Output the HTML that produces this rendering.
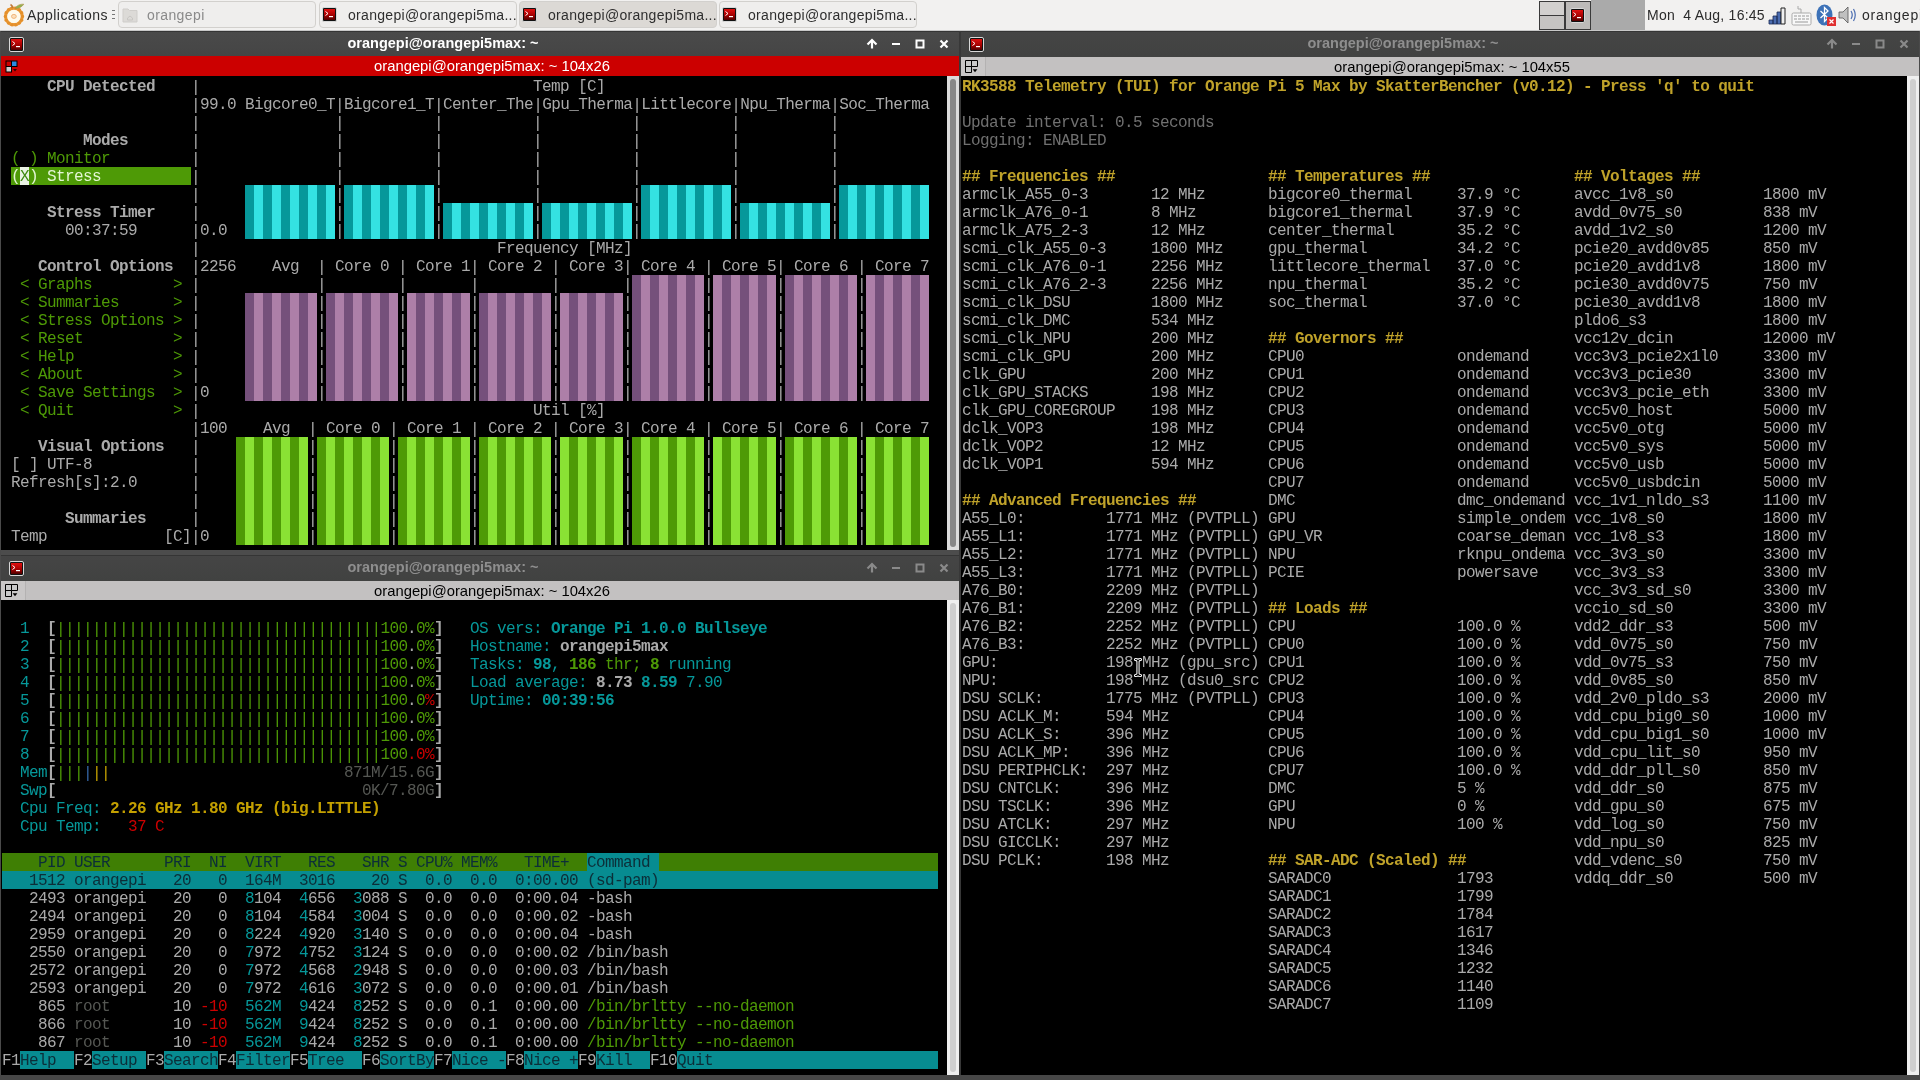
<!DOCTYPE html>
<html><head><meta charset="utf-8"><style>
html,body{margin:0;padding:0}
body{width:1920px;height:1080px;position:relative;overflow:hidden;background:#3e3e3e;font-family:"Liberation Sans",sans-serif}
.r{position:absolute}
.t{position:absolute;font-family:"Liberation Mono",monospace;font-size:16px;letter-spacing:-0.6px;line-height:18px;white-space:pre;margin-top:1px}
.t i{font-style:normal;position:relative;top:1px}
.tt{position:absolute;font-family:"Liberation Sans",sans-serif;font-weight:bold;font-size:14.5px;line-height:17px;text-align:center;white-space:pre}
.ht{position:absolute;font-family:"Liberation Sans",sans-serif;font-size:14.8px;line-height:17px;text-align:center;white-space:pre}
.tb{position:absolute;font-family:"Liberation Sans",sans-serif;font-size:13px;line-height:16px;white-space:pre;color:#2e2e2e}
</style></head><body>
<div style="position:absolute;left:0;top:0;width:1920px;height:1080px;will-change:transform">
<div style="position:absolute;left:0;top:0;width:1920px;height:31px;background:#f2f1f0"></div>
<div style="position:absolute;left:0;top:30px;width:1920px;height:1px;background:#c8c8c8"></div>
<div style="position:absolute;left:0;top:31px;width:1920px;height:1px;background:#353535"></div>
<svg style="position:absolute;left:0px;top:0px" width="30" height="30" viewBox="0 0 30 30">
<circle cx="13.9" cy="16.4" r="8.3" fill="none" stroke="#eb9a35" stroke-width="3.2"/><circle cx="22.50" cy="16.40" r="1.6" fill="#e48f2a"/><circle cx="21.65" cy="20.13" r="1.6" fill="#e48f2a"/><circle cx="19.26" cy="23.12" r="1.6" fill="#e48f2a"/><circle cx="15.81" cy="24.78" r="1.6" fill="#e48f2a"/><circle cx="11.99" cy="24.78" r="1.6" fill="#e48f2a"/><circle cx="8.54" cy="23.12" r="1.6" fill="#e48f2a"/><circle cx="6.15" cy="20.13" r="1.6" fill="#e48f2a"/><circle cx="5.30" cy="16.40" r="1.6" fill="#e48f2a"/><circle cx="6.15" cy="12.67" r="1.6" fill="#e48f2a"/><circle cx="8.54" cy="9.68" r="1.6" fill="#e48f2a"/><circle cx="11.99" cy="8.02" r="1.6" fill="#e48f2a"/><circle cx="15.81" cy="8.02" r="1.6" fill="#e48f2a"/><circle cx="19.26" cy="9.68" r="1.6" fill="#e48f2a"/><circle cx="21.65" cy="12.67" r="1.6" fill="#e48f2a"/>
<circle cx="13.9" cy="16.4" r="6.5" fill="#fffbec"/>
<ellipse cx="13.9" cy="16.4" rx="2.4" ry="2" fill="#fbe0bc" stroke="#f2b578" stroke-width="1"/>
<path d="M15 8.5 C17 5 20.5 4 23.8 4.2 C22 7 18.5 8.6 15 8.5 Z" fill="#8fb650" stroke="#b08a40" stroke-width="0.6"/>
<path d="M10.5 4.5 C11.5 5 12.5 6.5 12.5 8" stroke="#c07a3a" stroke-width="1.8" fill="none"/>
</svg>
<div class="tb" style="left:27px;top:7px;font-size:14px;letter-spacing:0.45px;color:#2b2b2b">Applications</div>
<div style="position:absolute;left:112px;top:10px;width:3px;height:10px;background:repeating-linear-gradient(#777 0 1px,transparent 1px 4px)"></div>
<div style="position:absolute;left:118px;top:1px;width:198px;height:27px;border:1px solid #d2d0cd;border-radius:4px;background:#efeeed;box-sizing:border-box"></div>
<svg style="position:absolute;left:122px;top:7px" width="16" height="16" viewBox="0 0 16 16"><path d="M1 2 H6 L7.5 3.5 H15 V15 H1 Z" fill="#dcdad7" stroke="#cfcdca"/><path d="M5.5 11 L8 9 L10.5 11 V13 H5.5 Z" fill="none" stroke="#c8c6c3"/></svg>
<div class="tb" style="left:147px;top:7px;font-size:14px;letter-spacing:0.4px;color:#8a8a8a">orangepi</div>
<div style="position:absolute;left:319px;top:1px;width:198px;height:27px;border:1px solid #d2d0cd;border-radius:4px;background:#efeeed;box-sizing:border-box"></div>
<div style="position:absolute;left:322px;top:7px;width:13px;height:13px;border:1px solid #d8d8d8;border-radius:2px;background:#000;box-shadow:inset 0 0 0 1px #111"></div>
<div style="position:absolute;left:324px;top:9px;width:11px;height:11px;background:linear-gradient(#e01010,#a00000 60%,#500000)"></div>
<svg style="position:absolute;left:322px;top:7px" width="15" height="15" viewBox="0 0 15 15"><path d="M3.5 4.5 L6 6.5 L3.5 8.5" stroke="#fff" stroke-width="1" fill="none"/><rect x="7" y="9" width="4" height="1.2" fill="#fff"/></svg>
<div class="tb" style="left:348px;top:7px;font-size:14px;letter-spacing:0.3px;color:#2e2e2e">orangepi@orangepi5ma...</div>
<div style="position:absolute;left:519px;top:1px;width:198px;height:27px;border:1px solid #d2d0cd;border-radius:4px;background:#dcd9d5;box-sizing:border-box"></div>
<div style="position:absolute;left:522px;top:7px;width:13px;height:13px;border:1px solid #d8d8d8;border-radius:2px;background:#000;box-shadow:inset 0 0 0 1px #111"></div>
<div style="position:absolute;left:524px;top:9px;width:11px;height:11px;background:linear-gradient(#e01010,#a00000 60%,#500000)"></div>
<svg style="position:absolute;left:522px;top:7px" width="15" height="15" viewBox="0 0 15 15"><path d="M3.5 4.5 L6 6.5 L3.5 8.5" stroke="#fff" stroke-width="1" fill="none"/><rect x="7" y="9" width="4" height="1.2" fill="#fff"/></svg>
<div class="tb" style="left:548px;top:7px;font-size:14px;letter-spacing:0.3px;color:#2e2e2e">orangepi@orangepi5ma...</div>
<div style="position:absolute;left:719px;top:1px;width:198px;height:27px;border:1px solid #d2d0cd;border-radius:4px;background:#efeeed;box-sizing:border-box"></div>
<div style="position:absolute;left:722px;top:7px;width:13px;height:13px;border:1px solid #d8d8d8;border-radius:2px;background:#000;box-shadow:inset 0 0 0 1px #111"></div>
<div style="position:absolute;left:724px;top:9px;width:11px;height:11px;background:linear-gradient(#e01010,#a00000 60%,#500000)"></div>
<svg style="position:absolute;left:722px;top:7px" width="15" height="15" viewBox="0 0 15 15"><path d="M3.5 4.5 L6 6.5 L3.5 8.5" stroke="#fff" stroke-width="1" fill="none"/><rect x="7" y="9" width="4" height="1.2" fill="#fff"/></svg>
<div class="tb" style="left:748px;top:7px;font-size:14px;letter-spacing:0.3px;color:#2e2e2e">orangepi@orangepi5ma...</div>
<div style="position:absolute;left:1539px;top:1px;width:52px;height:29px;background:#3a3a3a"></div>
<div style="position:absolute;left:1540px;top:2px;width:24px;height:13px;background:#d2d0ce"></div>
<div style="position:absolute;left:1540px;top:16px;width:24px;height:13px;background:#c6c4c2"></div>
<div style="position:absolute;left:1566px;top:2px;width:24px;height:27px;background:#bdbbb9"></div>
<div style="position:absolute;left:1570px;top:8px;width:13px;height:13px;border:1px solid #d8d8d8;border-radius:2px;background:#000;box-shadow:inset 0 0 0 1px #111"></div>
<div style="position:absolute;left:1572px;top:10px;width:11px;height:11px;background:linear-gradient(#e01010,#a00000 60%,#500000)"></div>
<svg style="position:absolute;left:1570px;top:8px" width="15" height="15" viewBox="0 0 15 15"><path d="M3.5 4.5 L6 6.5 L3.5 8.5" stroke="#fff" stroke-width="1" fill="none"/><rect x="7" y="9" width="4" height="1.2" fill="#fff"/></svg>
<div style="position:absolute;left:1591px;top:0px;width:54px;height:30px;background:#aaaaaa"></div>
<div class="tb" style="left:1647px;top:7px;font-size:14px;letter-spacing:0.25px;color:#2b2b2b">Mon  4 Aug, 16:45</div>
<svg style="position:absolute;left:1768px;top:7px" width="20" height="18" viewBox="0 0 20 18">
<path d="M1 17 V13 H5 V17 Z M5 17 V9 H9 V17 Z M9 17 V5 H13 V17 Z" fill="#4a6cb0" stroke="#1a2a50" stroke-width="0.8"/>
<path d="M13 17 V1 H17 V17 Z" fill="#f0f0f0" stroke="#222" stroke-width="1"/></svg>
<svg style="position:absolute;left:1791px;top:5px" width="22" height="22" viewBox="0 0 22 22">
<rect x="1" y="8" width="19" height="12" rx="1.5" fill="#f8f8f8" stroke="#aaa"/><path d="M10 8 V4 H7 V1" stroke="#aaa" fill="none"/>
<g fill="#c8c8c8"><rect x="3" y="10" width="3" height="2"/><rect x="7" y="10" width="3" height="2"/><rect x="11" y="10" width="3" height="2"/><rect x="15" y="10" width="3" height="2"/>
<rect x="3" y="13" width="3" height="2"/><rect x="7" y="13" width="3" height="2"/><rect x="11" y="13" width="3" height="2"/><rect x="15" y="13" width="3" height="2"/><rect x="4" y="16" width="13" height="2"/></g></svg>
<svg style="position:absolute;left:1816px;top:4px" width="22" height="23" viewBox="0 0 22 23">
<ellipse cx="8.5" cy="11" rx="8" ry="10.5" fill="#3d72b8"/><path d="M4.5 7 L12 14 L8.5 17.5 V3.5 L12 7 L4.5 14" stroke="#fff" stroke-width="1.3" fill="none"/>
<rect x="11" y="13" width="9" height="9" fill="#e03030"/><path d="M13.5 15.5 L17.5 19.5 M17.5 15.5 L13.5 19.5" stroke="#fff" stroke-width="1.2"/></svg>
<svg style="position:absolute;left:1838px;top:5px" width="20" height="20" viewBox="0 0 20 20">
<path d="M1 7 H5 L10 2 V18 L5 13 H1 Z" fill="#c0c0c0" stroke="#555" stroke-width="0.8"/><path d="M13 6 Q15.5 10 13 14 M15.5 4 Q19 10 15.5 16" stroke="#4a6cb0" stroke-width="1.2" fill="none"/></svg>
<div class="tb" style="left:1862px;top:7px;font-size:14px;letter-spacing:0.8px;color:#2b2b2b">orangepi</div>
<div style="position:absolute;left:0px;top:31px;width:960px;height:26px;background:linear-gradient(#4a4a4a,#454545)"></div>
<div style="position:absolute;left:0px;top:31px;width:960px;height:1px;background:#353535"></div>
<div style="position:absolute;left:9px;top:37px;width:13px;height:13px;border:1px solid #d8d8d8;border-radius:2px;background:#000;box-shadow:inset 0 0 0 1px #111"></div>
<div style="position:absolute;left:11px;top:39px;width:11px;height:11px;background:linear-gradient(#e01010,#a00000 60%,#500000)"></div>
<svg style="position:absolute;left:9px;top:37px" width="15" height="15" viewBox="0 0 15 15"><path d="M3.5 4.5 L6 6.5 L3.5 8.5" stroke="#fff" stroke-width="1" fill="none"/><rect x="7" y="9" width="4" height="1.2" fill="#fff"/></svg>
<div class="tt" style="left:293px;top:35px;width:300px;color:#ffffff">orangepi@orangepi5max: ~</div>
<svg style="position:absolute;left:865px;top:31px" width="95" height="25" viewBox="0 0 95 25">
<path d="M7 17.5 V10 M2.5 13.5 L7 9 L11.5 13.5" stroke="#ffffff" stroke-width="2.2" fill="none"/>
<rect x="27" y="12" width="8" height="2" fill="#ffffff"/>
<rect x="51.5" y="9.5" width="7" height="7" stroke="#ffffff" stroke-width="2" fill="none"/>
<path d="M75.5 9.5 L82.5 16.5 M82.5 9.5 L75.5 16.5" stroke="#ffffff" stroke-width="2.2"/>
</svg>
<div style="position:absolute;left:1px;top:56px;width:958px;height:20px;background:#cc0000"></div>
<div class="ht" style="left:12px;top:58px;width:960px;color:#fff">orangepi@orangepi5max: ~ 104x26</div>
<svg style="position:absolute;left:5px;top:60px" width="14" height="14" viewBox="0 0 14 14">
<rect x="0.5" y="0.5" width="12" height="12" fill="#000"/>
<rect x="1.5" y="1.5" width="4.5" height="4.5" fill="#cc0000"/><rect x="7" y="1.5" width="4.5" height="4.5" fill="#2a8ae0"/>
<rect x="1.5" y="7" width="4.5" height="4.5" fill="#cfcfcf"/><rect x="7" y="7" width="6" height="6" fill="#cc0000"/>
<path d="M8 9 L12 9 L10 11.5 Z" fill="#300"/></svg>
<div style="position:absolute;left:1px;top:76px;width:958px;height:474px;background:#000"></div>
<div style="position:absolute;left:947px;top:76px;width:12px;height:474px;background:#dcdcdc"></div>
<div style="position:absolute;left:950px;top:79px;width:6px;height:468px;background:#878787;border-radius:3px"></div>
<div style="position:absolute;left:0px;top:550px;width:960px;height:5px;background:#4c4c4c"></div>
<div style="position:absolute;left:0px;top:555px;width:960px;height:26px;background:linear-gradient(#454545,#414241)"></div>
<div style="position:absolute;left:0px;top:555px;width:960px;height:1px;background:#353535"></div>
<div style="position:absolute;left:9px;top:561px;width:13px;height:13px;border:1px solid #d8d8d8;border-radius:2px;background:#000;box-shadow:inset 0 0 0 1px #111"></div>
<div style="position:absolute;left:11px;top:563px;width:11px;height:11px;background:linear-gradient(#e01010,#a00000 60%,#500000)"></div>
<svg style="position:absolute;left:9px;top:561px" width="15" height="15" viewBox="0 0 15 15"><path d="M3.5 4.5 L6 6.5 L3.5 8.5" stroke="#fff" stroke-width="1" fill="none"/><rect x="7" y="9" width="4" height="1.2" fill="#fff"/></svg>
<div class="tt" style="left:293px;top:559px;width:300px;color:#8e8e8e">orangepi@orangepi5max: ~</div>
<svg style="position:absolute;left:865px;top:555px" width="95" height="25" viewBox="0 0 95 25">
<path d="M7 17.5 V10 M2.5 13.5 L7 9 L11.5 13.5" stroke="#8a8a8a" stroke-width="2.2" fill="none"/>
<rect x="27" y="12" width="8" height="2" fill="#8a8a8a"/>
<rect x="51.5" y="9.5" width="7" height="7" stroke="#8a8a8a" stroke-width="2" fill="none"/>
<path d="M75.5 9.5 L82.5 16.5 M82.5 9.5 L75.5 16.5" stroke="#8a8a8a" stroke-width="2.2"/>
</svg>
<div style="position:absolute;left:1px;top:581px;width:958px;height:19px;background:#c3c1c1"></div>
<div style="position:absolute;left:1px;top:581px;width:24px;height:19px;background:#c9c7c7;border-right:1px solid #b4b2b2"></div>
<div class="ht" style="left:12px;top:583px;width:960px;color:#000;margin-top:0px">orangepi@orangepi5max: ~ 104x26</div>
<svg style="position:absolute;left:5px;top:584px" width="14" height="14" viewBox="0 0 14 14">
<path d="M0.5 0.5 H12.5 V6.5 H6.5 V12.5 H0.5 Z M6.5 0.5 V6.5 M0.5 6.5 H6.5" stroke="#000" stroke-width="1" fill="#c8c8c8"/>
<path d="M7.6 9.2 L12.4 9.2 L10 12.2 Z" fill="#000"/></svg>
<div style="position:absolute;left:1px;top:600px;width:958px;height:475px;background:#000"></div>
<div style="position:absolute;left:947px;top:600px;width:12px;height:475px;background:#efefef"></div>
<div style="position:absolute;left:950px;top:603px;width:6px;height:469px;background:#cfcfcf;border-radius:3px"></div>
<div style="position:absolute;left:960px;top:31px;width:960px;height:26px;background:linear-gradient(#454545,#414241)"></div>
<div style="position:absolute;left:960px;top:31px;width:960px;height:1px;background:#353535"></div>
<div style="position:absolute;left:969px;top:37px;width:13px;height:13px;border:1px solid #d8d8d8;border-radius:2px;background:#000;box-shadow:inset 0 0 0 1px #111"></div>
<div style="position:absolute;left:971px;top:39px;width:11px;height:11px;background:linear-gradient(#e01010,#a00000 60%,#500000)"></div>
<svg style="position:absolute;left:969px;top:37px" width="15" height="15" viewBox="0 0 15 15"><path d="M3.5 4.5 L6 6.5 L3.5 8.5" stroke="#fff" stroke-width="1" fill="none"/><rect x="7" y="9" width="4" height="1.2" fill="#fff"/></svg>
<div class="tt" style="left:1253px;top:35px;width:300px;color:#8e8e8e">orangepi@orangepi5max: ~</div>
<svg style="position:absolute;left:1825px;top:31px" width="95" height="25" viewBox="0 0 95 25">
<path d="M7 17.5 V10 M2.5 13.5 L7 9 L11.5 13.5" stroke="#8a8a8a" stroke-width="2.2" fill="none"/>
<rect x="27" y="12" width="8" height="2" fill="#8a8a8a"/>
<rect x="51.5" y="9.5" width="7" height="7" stroke="#8a8a8a" stroke-width="2" fill="none"/>
<path d="M75.5 9.5 L82.5 16.5 M82.5 9.5 L75.5 16.5" stroke="#8a8a8a" stroke-width="2.2"/>
</svg>
<div style="position:absolute;left:961px;top:57px;width:958px;height:19px;background:#c3c1c1"></div>
<div style="position:absolute;left:961px;top:57px;width:24px;height:19px;background:#c9c7c7;border-right:1px solid #b4b2b2"></div>
<div class="ht" style="left:972px;top:59px;width:960px;color:#000;margin-top:0px">orangepi@orangepi5max: ~ 104x55</div>
<svg style="position:absolute;left:965px;top:60px" width="14" height="14" viewBox="0 0 14 14">
<path d="M0.5 0.5 H12.5 V6.5 H6.5 V12.5 H0.5 Z M6.5 0.5 V6.5 M0.5 6.5 H6.5" stroke="#000" stroke-width="1" fill="#c8c8c8"/>
<path d="M7.6 9.2 L12.4 9.2 L10 12.2 Z" fill="#000"/></svg>
<div style="position:absolute;left:961px;top:76px;width:958px;height:999px;background:#000"></div>
<div style="position:absolute;left:1907px;top:76px;width:12px;height:999px;background:#efefef"></div>
<div style="position:absolute;left:1910px;top:79px;width:6px;height:993px;background:#cfcfcf;border-radius:3px"></div>
<div style="position:absolute;left:0;top:31px;width:1px;height:1049px;background:#4a4a4a"></div>
<div style="position:absolute;left:959px;top:31px;width:2px;height:1049px;background:#383838"></div>
<div style="position:absolute;left:1919px;top:31px;width:1px;height:1049px;background:#4a4a4a"></div>
<div style="position:absolute;left:0;top:1075px;width:1920px;height:5px;background:#474747"></div>
<div style="position:absolute;left:0;top:0;width:1920px;height:1080px;will-change:transform"><div class="r" style="left:11px;top:167px;width:180px;height:18px;background:#4e9a06"></div>
<div class="r" style="left:20px;top:167px;width:9px;height:18px;background:#eaf2e4"></div>
<div class="r" style="left:245px;top:185px;width:9px;height:54px;background:#06989a"></div>
<div class="r" style="left:254px;top:185px;width:9px;height:54px;background:#34e2e2"></div>
<div class="r" style="left:263px;top:185px;width:9px;height:54px;background:#06989a"></div>
<div class="r" style="left:272px;top:185px;width:9px;height:54px;background:#34e2e2"></div>
<div class="r" style="left:281px;top:185px;width:9px;height:54px;background:#06989a"></div>
<div class="r" style="left:290px;top:185px;width:9px;height:54px;background:#34e2e2"></div>
<div class="r" style="left:299px;top:185px;width:9px;height:54px;background:#06989a"></div>
<div class="r" style="left:308px;top:185px;width:9px;height:54px;background:#34e2e2"></div>
<div class="r" style="left:317px;top:185px;width:9px;height:54px;background:#06989a"></div>
<div class="r" style="left:326px;top:185px;width:9px;height:54px;background:#34e2e2"></div>
<div class="r" style="left:344px;top:185px;width:9px;height:54px;background:#06989a"></div>
<div class="r" style="left:353px;top:185px;width:9px;height:54px;background:#34e2e2"></div>
<div class="r" style="left:362px;top:185px;width:9px;height:54px;background:#06989a"></div>
<div class="r" style="left:371px;top:185px;width:9px;height:54px;background:#34e2e2"></div>
<div class="r" style="left:380px;top:185px;width:9px;height:54px;background:#06989a"></div>
<div class="r" style="left:389px;top:185px;width:9px;height:54px;background:#34e2e2"></div>
<div class="r" style="left:398px;top:185px;width:9px;height:54px;background:#06989a"></div>
<div class="r" style="left:407px;top:185px;width:9px;height:54px;background:#34e2e2"></div>
<div class="r" style="left:416px;top:185px;width:9px;height:54px;background:#06989a"></div>
<div class="r" style="left:425px;top:185px;width:9px;height:54px;background:#34e2e2"></div>
<div class="r" style="left:443px;top:203px;width:9px;height:36px;background:#06989a"></div>
<div class="r" style="left:452px;top:203px;width:9px;height:36px;background:#34e2e2"></div>
<div class="r" style="left:461px;top:203px;width:9px;height:36px;background:#06989a"></div>
<div class="r" style="left:470px;top:203px;width:9px;height:36px;background:#34e2e2"></div>
<div class="r" style="left:479px;top:203px;width:9px;height:36px;background:#06989a"></div>
<div class="r" style="left:488px;top:203px;width:9px;height:36px;background:#34e2e2"></div>
<div class="r" style="left:497px;top:203px;width:9px;height:36px;background:#06989a"></div>
<div class="r" style="left:506px;top:203px;width:9px;height:36px;background:#34e2e2"></div>
<div class="r" style="left:515px;top:203px;width:9px;height:36px;background:#06989a"></div>
<div class="r" style="left:524px;top:203px;width:9px;height:36px;background:#34e2e2"></div>
<div class="r" style="left:542px;top:203px;width:9px;height:36px;background:#06989a"></div>
<div class="r" style="left:551px;top:203px;width:9px;height:36px;background:#34e2e2"></div>
<div class="r" style="left:560px;top:203px;width:9px;height:36px;background:#06989a"></div>
<div class="r" style="left:569px;top:203px;width:9px;height:36px;background:#34e2e2"></div>
<div class="r" style="left:578px;top:203px;width:9px;height:36px;background:#06989a"></div>
<div class="r" style="left:587px;top:203px;width:9px;height:36px;background:#34e2e2"></div>
<div class="r" style="left:596px;top:203px;width:9px;height:36px;background:#06989a"></div>
<div class="r" style="left:605px;top:203px;width:9px;height:36px;background:#34e2e2"></div>
<div class="r" style="left:614px;top:203px;width:9px;height:36px;background:#06989a"></div>
<div class="r" style="left:623px;top:203px;width:9px;height:36px;background:#34e2e2"></div>
<div class="r" style="left:641px;top:185px;width:9px;height:54px;background:#06989a"></div>
<div class="r" style="left:650px;top:185px;width:9px;height:54px;background:#34e2e2"></div>
<div class="r" style="left:659px;top:185px;width:9px;height:54px;background:#06989a"></div>
<div class="r" style="left:668px;top:185px;width:9px;height:54px;background:#34e2e2"></div>
<div class="r" style="left:677px;top:185px;width:9px;height:54px;background:#06989a"></div>
<div class="r" style="left:686px;top:185px;width:9px;height:54px;background:#34e2e2"></div>
<div class="r" style="left:695px;top:185px;width:9px;height:54px;background:#06989a"></div>
<div class="r" style="left:704px;top:185px;width:9px;height:54px;background:#34e2e2"></div>
<div class="r" style="left:713px;top:185px;width:9px;height:54px;background:#06989a"></div>
<div class="r" style="left:722px;top:185px;width:9px;height:54px;background:#34e2e2"></div>
<div class="r" style="left:740px;top:203px;width:9px;height:36px;background:#06989a"></div>
<div class="r" style="left:749px;top:203px;width:9px;height:36px;background:#34e2e2"></div>
<div class="r" style="left:758px;top:203px;width:9px;height:36px;background:#06989a"></div>
<div class="r" style="left:767px;top:203px;width:9px;height:36px;background:#34e2e2"></div>
<div class="r" style="left:776px;top:203px;width:9px;height:36px;background:#06989a"></div>
<div class="r" style="left:785px;top:203px;width:9px;height:36px;background:#34e2e2"></div>
<div class="r" style="left:794px;top:203px;width:9px;height:36px;background:#06989a"></div>
<div class="r" style="left:803px;top:203px;width:9px;height:36px;background:#34e2e2"></div>
<div class="r" style="left:812px;top:203px;width:9px;height:36px;background:#06989a"></div>
<div class="r" style="left:821px;top:203px;width:9px;height:36px;background:#34e2e2"></div>
<div class="r" style="left:839px;top:185px;width:9px;height:54px;background:#06989a"></div>
<div class="r" style="left:848px;top:185px;width:9px;height:54px;background:#34e2e2"></div>
<div class="r" style="left:857px;top:185px;width:9px;height:54px;background:#06989a"></div>
<div class="r" style="left:866px;top:185px;width:9px;height:54px;background:#34e2e2"></div>
<div class="r" style="left:875px;top:185px;width:9px;height:54px;background:#06989a"></div>
<div class="r" style="left:884px;top:185px;width:9px;height:54px;background:#34e2e2"></div>
<div class="r" style="left:893px;top:185px;width:9px;height:54px;background:#06989a"></div>
<div class="r" style="left:902px;top:185px;width:9px;height:54px;background:#34e2e2"></div>
<div class="r" style="left:911px;top:185px;width:9px;height:54px;background:#06989a"></div>
<div class="r" style="left:920px;top:185px;width:9px;height:54px;background:#34e2e2"></div>
<div class="r" style="left:245px;top:293px;width:9px;height:108px;background:#75507b"></div>
<div class="r" style="left:254px;top:293px;width:9px;height:108px;background:#ad7fa8"></div>
<div class="r" style="left:263px;top:293px;width:9px;height:108px;background:#75507b"></div>
<div class="r" style="left:272px;top:293px;width:9px;height:108px;background:#ad7fa8"></div>
<div class="r" style="left:281px;top:293px;width:9px;height:108px;background:#75507b"></div>
<div class="r" style="left:290px;top:293px;width:9px;height:108px;background:#ad7fa8"></div>
<div class="r" style="left:299px;top:293px;width:9px;height:108px;background:#75507b"></div>
<div class="r" style="left:308px;top:293px;width:9px;height:108px;background:#ad7fa8"></div>
<div class="r" style="left:326px;top:293px;width:9px;height:108px;background:#75507b"></div>
<div class="r" style="left:335px;top:293px;width:9px;height:108px;background:#ad7fa8"></div>
<div class="r" style="left:344px;top:293px;width:9px;height:108px;background:#75507b"></div>
<div class="r" style="left:353px;top:293px;width:9px;height:108px;background:#ad7fa8"></div>
<div class="r" style="left:362px;top:293px;width:9px;height:108px;background:#75507b"></div>
<div class="r" style="left:371px;top:293px;width:9px;height:108px;background:#ad7fa8"></div>
<div class="r" style="left:380px;top:293px;width:9px;height:108px;background:#75507b"></div>
<div class="r" style="left:389px;top:293px;width:9px;height:108px;background:#ad7fa8"></div>
<div class="r" style="left:407px;top:293px;width:9px;height:108px;background:#ad7fa8"></div>
<div class="r" style="left:416px;top:293px;width:9px;height:108px;background:#75507b"></div>
<div class="r" style="left:425px;top:293px;width:9px;height:108px;background:#ad7fa8"></div>
<div class="r" style="left:434px;top:293px;width:9px;height:108px;background:#75507b"></div>
<div class="r" style="left:443px;top:293px;width:9px;height:108px;background:#ad7fa8"></div>
<div class="r" style="left:452px;top:293px;width:9px;height:108px;background:#75507b"></div>
<div class="r" style="left:461px;top:293px;width:9px;height:108px;background:#ad7fa8"></div>
<div class="r" style="left:479px;top:293px;width:9px;height:108px;background:#75507b"></div>
<div class="r" style="left:488px;top:293px;width:9px;height:108px;background:#ad7fa8"></div>
<div class="r" style="left:497px;top:293px;width:9px;height:108px;background:#75507b"></div>
<div class="r" style="left:506px;top:293px;width:9px;height:108px;background:#ad7fa8"></div>
<div class="r" style="left:515px;top:293px;width:9px;height:108px;background:#75507b"></div>
<div class="r" style="left:524px;top:293px;width:9px;height:108px;background:#ad7fa8"></div>
<div class="r" style="left:533px;top:293px;width:9px;height:108px;background:#75507b"></div>
<div class="r" style="left:542px;top:293px;width:9px;height:108px;background:#ad7fa8"></div>
<div class="r" style="left:560px;top:293px;width:9px;height:108px;background:#ad7fa8"></div>
<div class="r" style="left:569px;top:293px;width:9px;height:108px;background:#75507b"></div>
<div class="r" style="left:578px;top:293px;width:9px;height:108px;background:#ad7fa8"></div>
<div class="r" style="left:587px;top:293px;width:9px;height:108px;background:#75507b"></div>
<div class="r" style="left:596px;top:293px;width:9px;height:108px;background:#ad7fa8"></div>
<div class="r" style="left:605px;top:293px;width:9px;height:108px;background:#75507b"></div>
<div class="r" style="left:614px;top:293px;width:9px;height:108px;background:#ad7fa8"></div>
<div class="r" style="left:632px;top:275px;width:9px;height:126px;background:#75507b"></div>
<div class="r" style="left:641px;top:275px;width:9px;height:126px;background:#ad7fa8"></div>
<div class="r" style="left:650px;top:275px;width:9px;height:126px;background:#75507b"></div>
<div class="r" style="left:659px;top:275px;width:9px;height:126px;background:#ad7fa8"></div>
<div class="r" style="left:668px;top:275px;width:9px;height:126px;background:#75507b"></div>
<div class="r" style="left:677px;top:275px;width:9px;height:126px;background:#ad7fa8"></div>
<div class="r" style="left:686px;top:275px;width:9px;height:126px;background:#75507b"></div>
<div class="r" style="left:695px;top:275px;width:9px;height:126px;background:#ad7fa8"></div>
<div class="r" style="left:713px;top:275px;width:9px;height:126px;background:#ad7fa8"></div>
<div class="r" style="left:722px;top:275px;width:9px;height:126px;background:#75507b"></div>
<div class="r" style="left:731px;top:275px;width:9px;height:126px;background:#ad7fa8"></div>
<div class="r" style="left:740px;top:275px;width:9px;height:126px;background:#75507b"></div>
<div class="r" style="left:749px;top:275px;width:9px;height:126px;background:#ad7fa8"></div>
<div class="r" style="left:758px;top:275px;width:9px;height:126px;background:#75507b"></div>
<div class="r" style="left:767px;top:275px;width:9px;height:126px;background:#ad7fa8"></div>
<div class="r" style="left:785px;top:275px;width:9px;height:126px;background:#75507b"></div>
<div class="r" style="left:794px;top:275px;width:9px;height:126px;background:#ad7fa8"></div>
<div class="r" style="left:803px;top:275px;width:9px;height:126px;background:#75507b"></div>
<div class="r" style="left:812px;top:275px;width:9px;height:126px;background:#ad7fa8"></div>
<div class="r" style="left:821px;top:275px;width:9px;height:126px;background:#75507b"></div>
<div class="r" style="left:830px;top:275px;width:9px;height:126px;background:#ad7fa8"></div>
<div class="r" style="left:839px;top:275px;width:9px;height:126px;background:#75507b"></div>
<div class="r" style="left:848px;top:275px;width:9px;height:126px;background:#ad7fa8"></div>
<div class="r" style="left:866px;top:275px;width:9px;height:126px;background:#ad7fa8"></div>
<div class="r" style="left:875px;top:275px;width:9px;height:126px;background:#75507b"></div>
<div class="r" style="left:884px;top:275px;width:9px;height:126px;background:#ad7fa8"></div>
<div class="r" style="left:893px;top:275px;width:9px;height:126px;background:#75507b"></div>
<div class="r" style="left:902px;top:275px;width:9px;height:126px;background:#ad7fa8"></div>
<div class="r" style="left:911px;top:275px;width:9px;height:126px;background:#75507b"></div>
<div class="r" style="left:920px;top:275px;width:9px;height:126px;background:#ad7fa8"></div>
<div class="r" style="left:236px;top:437px;width:9px;height:108px;background:#4e9a06"></div>
<div class="r" style="left:245px;top:437px;width:9px;height:108px;background:#8ae234"></div>
<div class="r" style="left:254px;top:437px;width:9px;height:108px;background:#4e9a06"></div>
<div class="r" style="left:263px;top:437px;width:9px;height:108px;background:#8ae234"></div>
<div class="r" style="left:272px;top:437px;width:9px;height:108px;background:#4e9a06"></div>
<div class="r" style="left:281px;top:437px;width:9px;height:108px;background:#8ae234"></div>
<div class="r" style="left:290px;top:437px;width:9px;height:108px;background:#4e9a06"></div>
<div class="r" style="left:299px;top:437px;width:9px;height:108px;background:#8ae234"></div>
<div class="r" style="left:317px;top:437px;width:9px;height:108px;background:#4e9a06"></div>
<div class="r" style="left:326px;top:437px;width:9px;height:108px;background:#8ae234"></div>
<div class="r" style="left:335px;top:437px;width:9px;height:108px;background:#4e9a06"></div>
<div class="r" style="left:344px;top:437px;width:9px;height:108px;background:#8ae234"></div>
<div class="r" style="left:353px;top:437px;width:9px;height:108px;background:#4e9a06"></div>
<div class="r" style="left:362px;top:437px;width:9px;height:108px;background:#8ae234"></div>
<div class="r" style="left:371px;top:437px;width:9px;height:108px;background:#4e9a06"></div>
<div class="r" style="left:380px;top:437px;width:9px;height:108px;background:#8ae234"></div>
<div class="r" style="left:398px;top:437px;width:9px;height:108px;background:#4e9a06"></div>
<div class="r" style="left:407px;top:437px;width:9px;height:108px;background:#8ae234"></div>
<div class="r" style="left:416px;top:437px;width:9px;height:108px;background:#4e9a06"></div>
<div class="r" style="left:425px;top:437px;width:9px;height:108px;background:#8ae234"></div>
<div class="r" style="left:434px;top:437px;width:9px;height:108px;background:#4e9a06"></div>
<div class="r" style="left:443px;top:437px;width:9px;height:108px;background:#8ae234"></div>
<div class="r" style="left:452px;top:437px;width:9px;height:108px;background:#4e9a06"></div>
<div class="r" style="left:461px;top:437px;width:9px;height:108px;background:#8ae234"></div>
<div class="r" style="left:479px;top:437px;width:9px;height:108px;background:#4e9a06"></div>
<div class="r" style="left:488px;top:437px;width:9px;height:108px;background:#8ae234"></div>
<div class="r" style="left:497px;top:437px;width:9px;height:108px;background:#4e9a06"></div>
<div class="r" style="left:506px;top:437px;width:9px;height:108px;background:#8ae234"></div>
<div class="r" style="left:515px;top:437px;width:9px;height:108px;background:#4e9a06"></div>
<div class="r" style="left:524px;top:437px;width:9px;height:108px;background:#8ae234"></div>
<div class="r" style="left:533px;top:437px;width:9px;height:108px;background:#4e9a06"></div>
<div class="r" style="left:542px;top:437px;width:9px;height:108px;background:#8ae234"></div>
<div class="r" style="left:560px;top:437px;width:9px;height:108px;background:#8ae234"></div>
<div class="r" style="left:569px;top:437px;width:9px;height:108px;background:#4e9a06"></div>
<div class="r" style="left:578px;top:437px;width:9px;height:108px;background:#8ae234"></div>
<div class="r" style="left:587px;top:437px;width:9px;height:108px;background:#4e9a06"></div>
<div class="r" style="left:596px;top:437px;width:9px;height:108px;background:#8ae234"></div>
<div class="r" style="left:605px;top:437px;width:9px;height:108px;background:#4e9a06"></div>
<div class="r" style="left:614px;top:437px;width:9px;height:108px;background:#8ae234"></div>
<div class="r" style="left:632px;top:437px;width:9px;height:108px;background:#4e9a06"></div>
<div class="r" style="left:641px;top:437px;width:9px;height:108px;background:#8ae234"></div>
<div class="r" style="left:650px;top:437px;width:9px;height:108px;background:#4e9a06"></div>
<div class="r" style="left:659px;top:437px;width:9px;height:108px;background:#8ae234"></div>
<div class="r" style="left:668px;top:437px;width:9px;height:108px;background:#4e9a06"></div>
<div class="r" style="left:677px;top:437px;width:9px;height:108px;background:#8ae234"></div>
<div class="r" style="left:686px;top:437px;width:9px;height:108px;background:#4e9a06"></div>
<div class="r" style="left:695px;top:437px;width:9px;height:108px;background:#8ae234"></div>
<div class="r" style="left:713px;top:437px;width:9px;height:108px;background:#8ae234"></div>
<div class="r" style="left:722px;top:437px;width:9px;height:108px;background:#4e9a06"></div>
<div class="r" style="left:731px;top:437px;width:9px;height:108px;background:#8ae234"></div>
<div class="r" style="left:740px;top:437px;width:9px;height:108px;background:#4e9a06"></div>
<div class="r" style="left:749px;top:437px;width:9px;height:108px;background:#8ae234"></div>
<div class="r" style="left:758px;top:437px;width:9px;height:108px;background:#4e9a06"></div>
<div class="r" style="left:767px;top:437px;width:9px;height:108px;background:#8ae234"></div>
<div class="r" style="left:785px;top:437px;width:9px;height:108px;background:#4e9a06"></div>
<div class="r" style="left:794px;top:437px;width:9px;height:108px;background:#8ae234"></div>
<div class="r" style="left:803px;top:437px;width:9px;height:108px;background:#4e9a06"></div>
<div class="r" style="left:812px;top:437px;width:9px;height:108px;background:#8ae234"></div>
<div class="r" style="left:821px;top:437px;width:9px;height:108px;background:#4e9a06"></div>
<div class="r" style="left:830px;top:437px;width:9px;height:108px;background:#8ae234"></div>
<div class="r" style="left:839px;top:437px;width:9px;height:108px;background:#4e9a06"></div>
<div class="r" style="left:848px;top:437px;width:9px;height:108px;background:#8ae234"></div>
<div class="r" style="left:866px;top:437px;width:9px;height:108px;background:#8ae234"></div>
<div class="r" style="left:875px;top:437px;width:9px;height:108px;background:#4e9a06"></div>
<div class="r" style="left:884px;top:437px;width:9px;height:108px;background:#8ae234"></div>
<div class="r" style="left:893px;top:437px;width:9px;height:108px;background:#4e9a06"></div>
<div class="r" style="left:902px;top:437px;width:9px;height:108px;background:#8ae234"></div>
<div class="r" style="left:911px;top:437px;width:9px;height:108px;background:#4e9a06"></div>
<div class="r" style="left:920px;top:437px;width:9px;height:108px;background:#8ae234"></div>
<div class="t" style="left:47px;top:77px;color:#aaaaaa;font-weight:bold">CPU Detected</div>
<div class="t" style="left:191px;top:77px;color:#aaaaaa"><i>|</i></div>
<div class="t" style="left:533px;top:77px;color:#aaaaaa">Temp [C]</div>
<div class="t" style="left:191px;top:95px;color:#aaaaaa"><i>|</i>99.0 Bigcore0_T<i>|</i>Bigcore1_T<i>|</i>Center_The<i>|</i>Gpu_Therma<i>|</i>Littlecore<i>|</i>Npu_Therma<i>|</i>Soc_Therma</div>
<div class="t" style="left:191px;top:113px;color:#aaaaaa"><i>|</i></div>
<div class="t" style="left:335px;top:113px;color:#aaaaaa"><i>|</i></div>
<div class="t" style="left:434px;top:113px;color:#aaaaaa"><i>|</i></div>
<div class="t" style="left:533px;top:113px;color:#aaaaaa"><i>|</i></div>
<div class="t" style="left:632px;top:113px;color:#aaaaaa"><i>|</i></div>
<div class="t" style="left:731px;top:113px;color:#aaaaaa"><i>|</i></div>
<div class="t" style="left:830px;top:113px;color:#aaaaaa"><i>|</i></div>
<div class="t" style="left:83px;top:131px;color:#aaaaaa;font-weight:bold">Modes</div>
<div class="t" style="left:191px;top:131px;color:#aaaaaa"><i>|</i></div>
<div class="t" style="left:335px;top:131px;color:#aaaaaa"><i>|</i></div>
<div class="t" style="left:434px;top:131px;color:#aaaaaa"><i>|</i></div>
<div class="t" style="left:533px;top:131px;color:#aaaaaa"><i>|</i></div>
<div class="t" style="left:632px;top:131px;color:#aaaaaa"><i>|</i></div>
<div class="t" style="left:731px;top:131px;color:#aaaaaa"><i>|</i></div>
<div class="t" style="left:830px;top:131px;color:#aaaaaa"><i>|</i></div>
<div class="t" style="left:11px;top:149px;color:#4e9a06">( ) Monitor</div>
<div class="t" style="left:191px;top:149px;color:#aaaaaa"><i>|</i></div>
<div class="t" style="left:335px;top:149px;color:#aaaaaa"><i>|</i></div>
<div class="t" style="left:434px;top:149px;color:#aaaaaa"><i>|</i></div>
<div class="t" style="left:533px;top:149px;color:#aaaaaa"><i>|</i></div>
<div class="t" style="left:632px;top:149px;color:#aaaaaa"><i>|</i></div>
<div class="t" style="left:731px;top:149px;color:#aaaaaa"><i>|</i></div>
<div class="t" style="left:830px;top:149px;color:#aaaaaa"><i>|</i></div>
<div class="t" style="left:11px;top:167px;color:#e4f6d4">(</div>
<div class="t" style="left:20px;top:167px;color:#3f8a10">X</div>
<div class="t" style="left:29px;top:167px;color:#e4f6d4">) Stress</div>
<div class="t" style="left:191px;top:167px;color:#aaaaaa"><i>|</i></div>
<div class="t" style="left:335px;top:167px;color:#aaaaaa"><i>|</i></div>
<div class="t" style="left:434px;top:167px;color:#aaaaaa"><i>|</i></div>
<div class="t" style="left:533px;top:167px;color:#aaaaaa"><i>|</i></div>
<div class="t" style="left:632px;top:167px;color:#aaaaaa"><i>|</i></div>
<div class="t" style="left:731px;top:167px;color:#aaaaaa"><i>|</i></div>
<div class="t" style="left:830px;top:167px;color:#aaaaaa"><i>|</i></div>
<div class="t" style="left:191px;top:185px;color:#aaaaaa"><i>|</i></div>
<div class="t" style="left:335px;top:185px;color:#aaaaaa"><i>|</i></div>
<div class="t" style="left:434px;top:185px;color:#aaaaaa"><i>|</i></div>
<div class="t" style="left:533px;top:185px;color:#aaaaaa"><i>|</i></div>
<div class="t" style="left:632px;top:185px;color:#aaaaaa"><i>|</i></div>
<div class="t" style="left:731px;top:185px;color:#aaaaaa"><i>|</i></div>
<div class="t" style="left:830px;top:185px;color:#aaaaaa"><i>|</i></div>
<div class="t" style="left:47px;top:203px;color:#aaaaaa;font-weight:bold">Stress Timer</div>
<div class="t" style="left:191px;top:203px;color:#aaaaaa"><i>|</i></div>
<div class="t" style="left:335px;top:203px;color:#aaaaaa"><i>|</i></div>
<div class="t" style="left:434px;top:203px;color:#aaaaaa"><i>|</i></div>
<div class="t" style="left:533px;top:203px;color:#aaaaaa"><i>|</i></div>
<div class="t" style="left:632px;top:203px;color:#aaaaaa"><i>|</i></div>
<div class="t" style="left:731px;top:203px;color:#aaaaaa"><i>|</i></div>
<div class="t" style="left:830px;top:203px;color:#aaaaaa"><i>|</i></div>
<div class="t" style="left:65px;top:221px;color:#aaaaaa">00:37:59</div>
<div class="t" style="left:191px;top:221px;color:#aaaaaa"><i>|</i>0.0</div>
<div class="t" style="left:335px;top:221px;color:#aaaaaa"><i>|</i></div>
<div class="t" style="left:434px;top:221px;color:#aaaaaa"><i>|</i></div>
<div class="t" style="left:533px;top:221px;color:#aaaaaa"><i>|</i></div>
<div class="t" style="left:632px;top:221px;color:#aaaaaa"><i>|</i></div>
<div class="t" style="left:731px;top:221px;color:#aaaaaa"><i>|</i></div>
<div class="t" style="left:830px;top:221px;color:#aaaaaa"><i>|</i></div>
<div class="t" style="left:191px;top:239px;color:#aaaaaa"><i>|</i></div>
<div class="t" style="left:497px;top:239px;color:#aaaaaa">Frequency [MHz]</div>
<div class="t" style="left:38px;top:257px;color:#aaaaaa;font-weight:bold">Control Options</div>
<div class="t" style="left:191px;top:257px;color:#aaaaaa"><i>|</i>2256</div>
<div class="t" style="left:272px;top:257px;color:#aaaaaa">Avg</div>
<div class="t" style="left:317px;top:257px;color:#aaaaaa"><i>|</i></div>
<div class="t" style="left:335px;top:257px;color:#aaaaaa">Core 0</div>
<div class="t" style="left:398px;top:257px;color:#aaaaaa"><i>|</i></div>
<div class="t" style="left:416px;top:257px;color:#aaaaaa">Core 1<i>|</i></div>
<div class="t" style="left:488px;top:257px;color:#aaaaaa">Core 2</div>
<div class="t" style="left:551px;top:257px;color:#aaaaaa"><i>|</i></div>
<div class="t" style="left:569px;top:257px;color:#aaaaaa">Core 3<i>|</i></div>
<div class="t" style="left:641px;top:257px;color:#aaaaaa">Core 4</div>
<div class="t" style="left:704px;top:257px;color:#aaaaaa"><i>|</i></div>
<div class="t" style="left:722px;top:257px;color:#aaaaaa">Core 5<i>|</i></div>
<div class="t" style="left:794px;top:257px;color:#aaaaaa">Core 6</div>
<div class="t" style="left:857px;top:257px;color:#aaaaaa"><i>|</i></div>
<div class="t" style="left:875px;top:257px;color:#aaaaaa">Core 7</div>
<div class="t" style="left:20px;top:275px;color:#4e9a06">&lt; Graphs</div>
<div class="t" style="left:173px;top:275px;color:#4e9a06">&gt;</div>
<div class="t" style="left:191px;top:275px;color:#aaaaaa"><i>|</i></div>
<div class="t" style="left:317px;top:275px;color:#aaaaaa"><i>|</i></div>
<div class="t" style="left:398px;top:275px;color:#aaaaaa"><i>|</i></div>
<div class="t" style="left:470px;top:275px;color:#aaaaaa"><i>|</i></div>
<div class="t" style="left:551px;top:275px;color:#aaaaaa"><i>|</i></div>
<div class="t" style="left:623px;top:275px;color:#aaaaaa"><i>|</i></div>
<div class="t" style="left:704px;top:275px;color:#aaaaaa"><i>|</i></div>
<div class="t" style="left:776px;top:275px;color:#aaaaaa"><i>|</i></div>
<div class="t" style="left:857px;top:275px;color:#aaaaaa"><i>|</i></div>
<div class="t" style="left:20px;top:293px;color:#4e9a06">&lt; Summaries</div>
<div class="t" style="left:173px;top:293px;color:#4e9a06">&gt;</div>
<div class="t" style="left:191px;top:293px;color:#aaaaaa"><i>|</i></div>
<div class="t" style="left:317px;top:293px;color:#aaaaaa"><i>|</i></div>
<div class="t" style="left:398px;top:293px;color:#aaaaaa"><i>|</i></div>
<div class="t" style="left:470px;top:293px;color:#aaaaaa"><i>|</i></div>
<div class="t" style="left:551px;top:293px;color:#aaaaaa"><i>|</i></div>
<div class="t" style="left:623px;top:293px;color:#aaaaaa"><i>|</i></div>
<div class="t" style="left:704px;top:293px;color:#aaaaaa"><i>|</i></div>
<div class="t" style="left:776px;top:293px;color:#aaaaaa"><i>|</i></div>
<div class="t" style="left:857px;top:293px;color:#aaaaaa"><i>|</i></div>
<div class="t" style="left:20px;top:311px;color:#4e9a06">&lt; Stress Options</div>
<div class="t" style="left:173px;top:311px;color:#4e9a06">&gt;</div>
<div class="t" style="left:191px;top:311px;color:#aaaaaa"><i>|</i></div>
<div class="t" style="left:317px;top:311px;color:#aaaaaa"><i>|</i></div>
<div class="t" style="left:398px;top:311px;color:#aaaaaa"><i>|</i></div>
<div class="t" style="left:470px;top:311px;color:#aaaaaa"><i>|</i></div>
<div class="t" style="left:551px;top:311px;color:#aaaaaa"><i>|</i></div>
<div class="t" style="left:623px;top:311px;color:#aaaaaa"><i>|</i></div>
<div class="t" style="left:704px;top:311px;color:#aaaaaa"><i>|</i></div>
<div class="t" style="left:776px;top:311px;color:#aaaaaa"><i>|</i></div>
<div class="t" style="left:857px;top:311px;color:#aaaaaa"><i>|</i></div>
<div class="t" style="left:20px;top:329px;color:#4e9a06">&lt; Reset</div>
<div class="t" style="left:173px;top:329px;color:#4e9a06">&gt;</div>
<div class="t" style="left:191px;top:329px;color:#aaaaaa"><i>|</i></div>
<div class="t" style="left:317px;top:329px;color:#aaaaaa"><i>|</i></div>
<div class="t" style="left:398px;top:329px;color:#aaaaaa"><i>|</i></div>
<div class="t" style="left:470px;top:329px;color:#aaaaaa"><i>|</i></div>
<div class="t" style="left:551px;top:329px;color:#aaaaaa"><i>|</i></div>
<div class="t" style="left:623px;top:329px;color:#aaaaaa"><i>|</i></div>
<div class="t" style="left:704px;top:329px;color:#aaaaaa"><i>|</i></div>
<div class="t" style="left:776px;top:329px;color:#aaaaaa"><i>|</i></div>
<div class="t" style="left:857px;top:329px;color:#aaaaaa"><i>|</i></div>
<div class="t" style="left:20px;top:347px;color:#4e9a06">&lt; Help</div>
<div class="t" style="left:173px;top:347px;color:#4e9a06">&gt;</div>
<div class="t" style="left:191px;top:347px;color:#aaaaaa"><i>|</i></div>
<div class="t" style="left:317px;top:347px;color:#aaaaaa"><i>|</i></div>
<div class="t" style="left:398px;top:347px;color:#aaaaaa"><i>|</i></div>
<div class="t" style="left:470px;top:347px;color:#aaaaaa"><i>|</i></div>
<div class="t" style="left:551px;top:347px;color:#aaaaaa"><i>|</i></div>
<div class="t" style="left:623px;top:347px;color:#aaaaaa"><i>|</i></div>
<div class="t" style="left:704px;top:347px;color:#aaaaaa"><i>|</i></div>
<div class="t" style="left:776px;top:347px;color:#aaaaaa"><i>|</i></div>
<div class="t" style="left:857px;top:347px;color:#aaaaaa"><i>|</i></div>
<div class="t" style="left:20px;top:365px;color:#4e9a06">&lt; About</div>
<div class="t" style="left:173px;top:365px;color:#4e9a06">&gt;</div>
<div class="t" style="left:191px;top:365px;color:#aaaaaa"><i>|</i></div>
<div class="t" style="left:317px;top:365px;color:#aaaaaa"><i>|</i></div>
<div class="t" style="left:398px;top:365px;color:#aaaaaa"><i>|</i></div>
<div class="t" style="left:470px;top:365px;color:#aaaaaa"><i>|</i></div>
<div class="t" style="left:551px;top:365px;color:#aaaaaa"><i>|</i></div>
<div class="t" style="left:623px;top:365px;color:#aaaaaa"><i>|</i></div>
<div class="t" style="left:704px;top:365px;color:#aaaaaa"><i>|</i></div>
<div class="t" style="left:776px;top:365px;color:#aaaaaa"><i>|</i></div>
<div class="t" style="left:857px;top:365px;color:#aaaaaa"><i>|</i></div>
<div class="t" style="left:20px;top:383px;color:#4e9a06">&lt; Save Settings</div>
<div class="t" style="left:173px;top:383px;color:#4e9a06">&gt;</div>
<div class="t" style="left:191px;top:383px;color:#aaaaaa"><i>|</i>0</div>
<div class="t" style="left:317px;top:383px;color:#aaaaaa"><i>|</i></div>
<div class="t" style="left:398px;top:383px;color:#aaaaaa"><i>|</i></div>
<div class="t" style="left:470px;top:383px;color:#aaaaaa"><i>|</i></div>
<div class="t" style="left:551px;top:383px;color:#aaaaaa"><i>|</i></div>
<div class="t" style="left:623px;top:383px;color:#aaaaaa"><i>|</i></div>
<div class="t" style="left:704px;top:383px;color:#aaaaaa"><i>|</i></div>
<div class="t" style="left:776px;top:383px;color:#aaaaaa"><i>|</i></div>
<div class="t" style="left:857px;top:383px;color:#aaaaaa"><i>|</i></div>
<div class="t" style="left:20px;top:401px;color:#4e9a06">&lt; Quit</div>
<div class="t" style="left:173px;top:401px;color:#4e9a06">&gt;</div>
<div class="t" style="left:191px;top:401px;color:#aaaaaa"><i>|</i></div>
<div class="t" style="left:533px;top:401px;color:#aaaaaa">Util [%]</div>
<div class="t" style="left:191px;top:419px;color:#aaaaaa"><i>|</i>100</div>
<div class="t" style="left:263px;top:419px;color:#aaaaaa">Avg</div>
<div class="t" style="left:308px;top:419px;color:#aaaaaa"><i>|</i></div>
<div class="t" style="left:326px;top:419px;color:#aaaaaa">Core 0</div>
<div class="t" style="left:389px;top:419px;color:#aaaaaa"><i>|</i></div>
<div class="t" style="left:407px;top:419px;color:#aaaaaa">Core 1</div>
<div class="t" style="left:470px;top:419px;color:#aaaaaa"><i>|</i></div>
<div class="t" style="left:488px;top:419px;color:#aaaaaa">Core 2</div>
<div class="t" style="left:551px;top:419px;color:#aaaaaa"><i>|</i></div>
<div class="t" style="left:569px;top:419px;color:#aaaaaa">Core 3<i>|</i></div>
<div class="t" style="left:641px;top:419px;color:#aaaaaa">Core 4</div>
<div class="t" style="left:704px;top:419px;color:#aaaaaa"><i>|</i></div>
<div class="t" style="left:722px;top:419px;color:#aaaaaa">Core 5<i>|</i></div>
<div class="t" style="left:794px;top:419px;color:#aaaaaa">Core 6</div>
<div class="t" style="left:857px;top:419px;color:#aaaaaa"><i>|</i></div>
<div class="t" style="left:875px;top:419px;color:#aaaaaa">Core 7</div>
<div class="t" style="left:38px;top:437px;color:#aaaaaa;font-weight:bold">Visual Options</div>
<div class="t" style="left:191px;top:437px;color:#aaaaaa"><i>|</i></div>
<div class="t" style="left:308px;top:437px;color:#aaaaaa"><i>|</i></div>
<div class="t" style="left:389px;top:437px;color:#aaaaaa"><i>|</i></div>
<div class="t" style="left:470px;top:437px;color:#aaaaaa"><i>|</i></div>
<div class="t" style="left:551px;top:437px;color:#aaaaaa"><i>|</i></div>
<div class="t" style="left:623px;top:437px;color:#aaaaaa"><i>|</i></div>
<div class="t" style="left:704px;top:437px;color:#aaaaaa"><i>|</i></div>
<div class="t" style="left:776px;top:437px;color:#aaaaaa"><i>|</i></div>
<div class="t" style="left:857px;top:437px;color:#aaaaaa"><i>|</i></div>
<div class="t" style="left:11px;top:455px;color:#aaaaaa">[ ] UTF-8</div>
<div class="t" style="left:191px;top:455px;color:#aaaaaa"><i>|</i></div>
<div class="t" style="left:308px;top:455px;color:#aaaaaa"><i>|</i></div>
<div class="t" style="left:389px;top:455px;color:#aaaaaa"><i>|</i></div>
<div class="t" style="left:470px;top:455px;color:#aaaaaa"><i>|</i></div>
<div class="t" style="left:551px;top:455px;color:#aaaaaa"><i>|</i></div>
<div class="t" style="left:623px;top:455px;color:#aaaaaa"><i>|</i></div>
<div class="t" style="left:704px;top:455px;color:#aaaaaa"><i>|</i></div>
<div class="t" style="left:776px;top:455px;color:#aaaaaa"><i>|</i></div>
<div class="t" style="left:857px;top:455px;color:#aaaaaa"><i>|</i></div>
<div class="t" style="left:11px;top:473px;color:#aaaaaa">Refresh[s]:2.0</div>
<div class="t" style="left:191px;top:473px;color:#aaaaaa"><i>|</i></div>
<div class="t" style="left:308px;top:473px;color:#aaaaaa"><i>|</i></div>
<div class="t" style="left:389px;top:473px;color:#aaaaaa"><i>|</i></div>
<div class="t" style="left:470px;top:473px;color:#aaaaaa"><i>|</i></div>
<div class="t" style="left:551px;top:473px;color:#aaaaaa"><i>|</i></div>
<div class="t" style="left:623px;top:473px;color:#aaaaaa"><i>|</i></div>
<div class="t" style="left:704px;top:473px;color:#aaaaaa"><i>|</i></div>
<div class="t" style="left:776px;top:473px;color:#aaaaaa"><i>|</i></div>
<div class="t" style="left:857px;top:473px;color:#aaaaaa"><i>|</i></div>
<div class="t" style="left:191px;top:491px;color:#aaaaaa"><i>|</i></div>
<div class="t" style="left:308px;top:491px;color:#aaaaaa"><i>|</i></div>
<div class="t" style="left:389px;top:491px;color:#aaaaaa"><i>|</i></div>
<div class="t" style="left:470px;top:491px;color:#aaaaaa"><i>|</i></div>
<div class="t" style="left:551px;top:491px;color:#aaaaaa"><i>|</i></div>
<div class="t" style="left:623px;top:491px;color:#aaaaaa"><i>|</i></div>
<div class="t" style="left:704px;top:491px;color:#aaaaaa"><i>|</i></div>
<div class="t" style="left:776px;top:491px;color:#aaaaaa"><i>|</i></div>
<div class="t" style="left:857px;top:491px;color:#aaaaaa"><i>|</i></div>
<div class="t" style="left:65px;top:509px;color:#aaaaaa;font-weight:bold">Summaries</div>
<div class="t" style="left:191px;top:509px;color:#aaaaaa"><i>|</i></div>
<div class="t" style="left:308px;top:509px;color:#aaaaaa"><i>|</i></div>
<div class="t" style="left:389px;top:509px;color:#aaaaaa"><i>|</i></div>
<div class="t" style="left:470px;top:509px;color:#aaaaaa"><i>|</i></div>
<div class="t" style="left:551px;top:509px;color:#aaaaaa"><i>|</i></div>
<div class="t" style="left:623px;top:509px;color:#aaaaaa"><i>|</i></div>
<div class="t" style="left:704px;top:509px;color:#aaaaaa"><i>|</i></div>
<div class="t" style="left:776px;top:509px;color:#aaaaaa"><i>|</i></div>
<div class="t" style="left:857px;top:509px;color:#aaaaaa"><i>|</i></div>
<div class="t" style="left:11px;top:527px;color:#aaaaaa">Temp</div>
<div class="t" style="left:164px;top:527px;color:#aaaaaa">[C]<i>|</i>0</div>
<div class="t" style="left:308px;top:527px;color:#aaaaaa"><i>|</i></div>
<div class="t" style="left:389px;top:527px;color:#aaaaaa"><i>|</i></div>
<div class="t" style="left:470px;top:527px;color:#aaaaaa"><i>|</i></div>
<div class="t" style="left:551px;top:527px;color:#aaaaaa"><i>|</i></div>
<div class="t" style="left:623px;top:527px;color:#aaaaaa"><i>|</i></div>
<div class="t" style="left:704px;top:527px;color:#aaaaaa"><i>|</i></div>
<div class="t" style="left:776px;top:527px;color:#aaaaaa"><i>|</i></div>
<div class="t" style="left:857px;top:527px;color:#aaaaaa"><i>|</i></div><div class="r" style="left:2px;top:853px;width:936px;height:18px;background:#3f7f04"></div>
<div class="r" style="left:587px;top:853px;width:72px;height:18px;background:#078c91"></div>
<div class="r" style="left:2px;top:871px;width:936px;height:18px;background:#078c91"></div>
<div class="r" style="left:20px;top:1051px;width:54px;height:18px;background:#078c91"></div>
<div class="r" style="left:92px;top:1051px;width:54px;height:18px;background:#078c91"></div>
<div class="r" style="left:164px;top:1051px;width:54px;height:18px;background:#078c91"></div>
<div class="r" style="left:236px;top:1051px;width:54px;height:18px;background:#078c91"></div>
<div class="r" style="left:308px;top:1051px;width:54px;height:18px;background:#078c91"></div>
<div class="r" style="left:380px;top:1051px;width:54px;height:18px;background:#078c91"></div>
<div class="r" style="left:452px;top:1051px;width:54px;height:18px;background:#078c91"></div>
<div class="r" style="left:524px;top:1051px;width:54px;height:18px;background:#078c91"></div>
<div class="r" style="left:596px;top:1051px;width:54px;height:18px;background:#078c91"></div>
<div class="r" style="left:677px;top:1051px;width:261px;height:18px;background:#078c91"></div>
<div class="t" style="left:20px;top:619px;color:#06989a">1</div>
<div class="t" style="left:47px;top:619px;color:#aaaaaa;font-weight:bold">[</div>
<div class="t" style="left:56px;top:619px;color:#4e9a06"><i>|</i><i>|</i><i>|</i><i>|</i><i>|</i><i>|</i><i>|</i><i>|</i><i>|</i><i>|</i><i>|</i><i>|</i><i>|</i><i>|</i><i>|</i><i>|</i><i>|</i><i>|</i><i>|</i><i>|</i><i>|</i><i>|</i><i>|</i><i>|</i><i>|</i><i>|</i><i>|</i><i>|</i><i>|</i><i>|</i><i>|</i><i>|</i><i>|</i><i>|</i><i>|</i><i>|</i>100</div>
<div class="t" style="left:407px;top:619px;color:#aaaaaa">.</div>
<div class="t" style="left:416px;top:619px;color:#4e9a06">0%</div>
<div class="t" style="left:434px;top:619px;color:#aaaaaa;font-weight:bold">]</div>
<div class="t" style="left:470px;top:619px;color:#06989a">OS vers:</div>
<div class="t" style="left:551px;top:619px;color:#06989a;font-weight:bold">Orange Pi 1.0.0 Bullseye</div>
<div class="t" style="left:20px;top:637px;color:#06989a">2</div>
<div class="t" style="left:47px;top:637px;color:#aaaaaa;font-weight:bold">[</div>
<div class="t" style="left:56px;top:637px;color:#4e9a06"><i>|</i><i>|</i><i>|</i><i>|</i><i>|</i><i>|</i><i>|</i><i>|</i><i>|</i><i>|</i><i>|</i><i>|</i><i>|</i><i>|</i><i>|</i><i>|</i><i>|</i><i>|</i><i>|</i><i>|</i><i>|</i><i>|</i><i>|</i><i>|</i><i>|</i><i>|</i><i>|</i><i>|</i><i>|</i><i>|</i><i>|</i><i>|</i><i>|</i><i>|</i><i>|</i><i>|</i>100</div>
<div class="t" style="left:407px;top:637px;color:#aaaaaa">.</div>
<div class="t" style="left:416px;top:637px;color:#4e9a06">0%</div>
<div class="t" style="left:434px;top:637px;color:#aaaaaa;font-weight:bold">]</div>
<div class="t" style="left:470px;top:637px;color:#06989a">Hostname:</div>
<div class="t" style="left:560px;top:637px;color:#aaaaaa;font-weight:bold">orangepi5max</div>
<div class="t" style="left:20px;top:655px;color:#06989a">3</div>
<div class="t" style="left:47px;top:655px;color:#aaaaaa;font-weight:bold">[</div>
<div class="t" style="left:56px;top:655px;color:#4e9a06"><i>|</i><i>|</i><i>|</i><i>|</i><i>|</i><i>|</i><i>|</i><i>|</i><i>|</i><i>|</i><i>|</i><i>|</i><i>|</i><i>|</i><i>|</i><i>|</i><i>|</i><i>|</i><i>|</i><i>|</i><i>|</i><i>|</i><i>|</i><i>|</i><i>|</i><i>|</i><i>|</i><i>|</i><i>|</i><i>|</i><i>|</i><i>|</i><i>|</i><i>|</i><i>|</i><i>|</i>100</div>
<div class="t" style="left:407px;top:655px;color:#aaaaaa">.</div>
<div class="t" style="left:416px;top:655px;color:#4e9a06">0%</div>
<div class="t" style="left:434px;top:655px;color:#aaaaaa;font-weight:bold">]</div>
<div class="t" style="left:470px;top:655px;color:#06989a">Tasks:</div>
<div class="t" style="left:533px;top:655px;color:#06989a;font-weight:bold">98</div>
<div class="t" style="left:551px;top:655px;color:#06989a">,</div>
<div class="t" style="left:569px;top:655px;color:#4e9a06;font-weight:bold">186</div>
<div class="t" style="left:605px;top:655px;color:#4e9a06">thr;</div>
<div class="t" style="left:650px;top:655px;color:#4e9a06;font-weight:bold">8</div>
<div class="t" style="left:668px;top:655px;color:#06989a">running</div>
<div class="t" style="left:20px;top:673px;color:#06989a">4</div>
<div class="t" style="left:47px;top:673px;color:#aaaaaa;font-weight:bold">[</div>
<div class="t" style="left:56px;top:673px;color:#4e9a06"><i>|</i><i>|</i><i>|</i><i>|</i><i>|</i><i>|</i><i>|</i><i>|</i><i>|</i><i>|</i><i>|</i><i>|</i><i>|</i><i>|</i><i>|</i><i>|</i><i>|</i><i>|</i><i>|</i><i>|</i><i>|</i><i>|</i><i>|</i><i>|</i><i>|</i><i>|</i><i>|</i><i>|</i><i>|</i><i>|</i><i>|</i><i>|</i><i>|</i><i>|</i><i>|</i><i>|</i>100</div>
<div class="t" style="left:407px;top:673px;color:#aaaaaa">.</div>
<div class="t" style="left:416px;top:673px;color:#4e9a06">0%</div>
<div class="t" style="left:434px;top:673px;color:#aaaaaa;font-weight:bold">]</div>
<div class="t" style="left:470px;top:673px;color:#06989a">Load average:</div>
<div class="t" style="left:596px;top:673px;color:#aaaaaa;font-weight:bold">8.73</div>
<div class="t" style="left:641px;top:673px;color:#06989a;font-weight:bold">8.59</div>
<div class="t" style="left:686px;top:673px;color:#06989a">7.90</div>
<div class="t" style="left:20px;top:691px;color:#06989a">5</div>
<div class="t" style="left:47px;top:691px;color:#aaaaaa;font-weight:bold">[</div>
<div class="t" style="left:56px;top:691px;color:#4e9a06"><i>|</i><i>|</i><i>|</i><i>|</i><i>|</i><i>|</i><i>|</i><i>|</i><i>|</i><i>|</i><i>|</i><i>|</i><i>|</i><i>|</i><i>|</i><i>|</i><i>|</i><i>|</i><i>|</i><i>|</i><i>|</i><i>|</i><i>|</i><i>|</i><i>|</i><i>|</i><i>|</i><i>|</i><i>|</i><i>|</i><i>|</i><i>|</i><i>|</i><i>|</i><i>|</i><i>|</i>100</div>
<div class="t" style="left:407px;top:691px;color:#aaaaaa">.</div>
<div class="t" style="left:416px;top:691px;color:#4e9a06">0</div>
<div class="t" style="left:425px;top:691px;color:#cc0000">%</div>
<div class="t" style="left:434px;top:691px;color:#aaaaaa;font-weight:bold">]</div>
<div class="t" style="left:470px;top:691px;color:#06989a">Uptime:</div>
<div class="t" style="left:542px;top:691px;color:#06989a;font-weight:bold">00:39:56</div>
<div class="t" style="left:20px;top:709px;color:#06989a">6</div>
<div class="t" style="left:47px;top:709px;color:#aaaaaa;font-weight:bold">[</div>
<div class="t" style="left:56px;top:709px;color:#4e9a06"><i>|</i><i>|</i><i>|</i><i>|</i><i>|</i><i>|</i><i>|</i><i>|</i><i>|</i><i>|</i><i>|</i><i>|</i><i>|</i><i>|</i><i>|</i><i>|</i><i>|</i><i>|</i><i>|</i><i>|</i><i>|</i><i>|</i><i>|</i><i>|</i><i>|</i><i>|</i><i>|</i><i>|</i><i>|</i><i>|</i><i>|</i><i>|</i><i>|</i><i>|</i><i>|</i><i>|</i>100</div>
<div class="t" style="left:407px;top:709px;color:#aaaaaa">.</div>
<div class="t" style="left:416px;top:709px;color:#4e9a06">0%</div>
<div class="t" style="left:434px;top:709px;color:#aaaaaa;font-weight:bold">]</div>
<div class="t" style="left:20px;top:727px;color:#06989a">7</div>
<div class="t" style="left:47px;top:727px;color:#aaaaaa;font-weight:bold">[</div>
<div class="t" style="left:56px;top:727px;color:#4e9a06"><i>|</i><i>|</i><i>|</i><i>|</i><i>|</i><i>|</i><i>|</i><i>|</i><i>|</i><i>|</i><i>|</i><i>|</i><i>|</i><i>|</i><i>|</i><i>|</i><i>|</i><i>|</i><i>|</i><i>|</i><i>|</i><i>|</i><i>|</i><i>|</i><i>|</i><i>|</i><i>|</i><i>|</i><i>|</i><i>|</i><i>|</i><i>|</i><i>|</i><i>|</i><i>|</i><i>|</i>100</div>
<div class="t" style="left:407px;top:727px;color:#aaaaaa">.</div>
<div class="t" style="left:416px;top:727px;color:#4e9a06">0%</div>
<div class="t" style="left:434px;top:727px;color:#aaaaaa;font-weight:bold">]</div>
<div class="t" style="left:20px;top:745px;color:#06989a">8</div>
<div class="t" style="left:47px;top:745px;color:#aaaaaa;font-weight:bold">[</div>
<div class="t" style="left:56px;top:745px;color:#4e9a06"><i>|</i><i>|</i><i>|</i><i>|</i><i>|</i><i>|</i><i>|</i><i>|</i><i>|</i><i>|</i><i>|</i><i>|</i><i>|</i><i>|</i><i>|</i><i>|</i><i>|</i><i>|</i><i>|</i><i>|</i><i>|</i><i>|</i><i>|</i><i>|</i><i>|</i><i>|</i><i>|</i><i>|</i><i>|</i><i>|</i><i>|</i><i>|</i><i>|</i><i>|</i><i>|</i><i>|</i>100</div>
<div class="t" style="left:407px;top:745px;color:#cc0000">.0%</div>
<div class="t" style="left:434px;top:745px;color:#aaaaaa;font-weight:bold">]</div>
<div class="t" style="left:20px;top:763px;color:#06989a">Mem</div>
<div class="t" style="left:47px;top:763px;color:#aaaaaa;font-weight:bold">[</div>
<div class="t" style="left:56px;top:763px;color:#4e9a06"><i>|</i><i>|</i><i>|</i></div>
<div class="t" style="left:83px;top:763px;color:#3465a4"><i>|</i></div>
<div class="t" style="left:92px;top:763px;color:#c4a000"><i>|</i><i>|</i></div>
<div class="t" style="left:344px;top:763px;color:#555753">871M/15.6G</div>
<div class="t" style="left:434px;top:763px;color:#aaaaaa;font-weight:bold">]</div>
<div class="t" style="left:20px;top:781px;color:#06989a">Swp</div>
<div class="t" style="left:47px;top:781px;color:#aaaaaa;font-weight:bold">[</div>
<div class="t" style="left:362px;top:781px;color:#555753">0K/7.80G</div>
<div class="t" style="left:434px;top:781px;color:#aaaaaa;font-weight:bold">]</div>
<div class="t" style="left:20px;top:799px;color:#06989a">Cpu Freq:</div>
<div class="t" style="left:110px;top:799px;color:#c4a000;font-weight:bold">2.26 GHz 1.80 GHz (big.LITTLE)</div>
<div class="t" style="left:20px;top:817px;color:#06989a">Cpu Temp:</div>
<div class="t" style="left:128px;top:817px;color:#cc0000">37 C</div>
<div class="t" style="left:38px;top:853px;color:#0c2e38">PID</div>
<div class="t" style="left:74px;top:853px;color:#0c2e38">USER</div>
<div class="t" style="left:164px;top:853px;color:#0c2e38">PRI</div>
<div class="t" style="left:209px;top:853px;color:#0c2e38">NI</div>
<div class="t" style="left:245px;top:853px;color:#0c2e38">VIRT</div>
<div class="t" style="left:308px;top:853px;color:#0c2e38">RES</div>
<div class="t" style="left:362px;top:853px;color:#0c2e38">SHR</div>
<div class="t" style="left:398px;top:853px;color:#0c2e38">S</div>
<div class="t" style="left:416px;top:853px;color:#0c2e38">CPU%</div>
<div class="t" style="left:461px;top:853px;color:#0c2e38">MEM%</div>
<div class="t" style="left:524px;top:853px;color:#0c2e38">TIME+</div>
<div class="t" style="left:587px;top:853px;color:#0c2e38">Command</div>
<div class="t" style="left:29px;top:871px;color:#0c2e38">1512</div>
<div class="t" style="left:74px;top:871px;color:#0c2e38">orangepi</div>
<div class="t" style="left:173px;top:871px;color:#0c2e38">20</div>
<div class="t" style="left:218px;top:871px;color:#0c2e38">0</div>
<div class="t" style="left:245px;top:871px;color:#0c2e38">164M</div>
<div class="t" style="left:299px;top:871px;color:#0c2e38">3016</div>
<div class="t" style="left:371px;top:871px;color:#0c2e38">20</div>
<div class="t" style="left:398px;top:871px;color:#0c2e38">S</div>
<div class="t" style="left:425px;top:871px;color:#0c2e38">0.0</div>
<div class="t" style="left:470px;top:871px;color:#0c2e38">0.0</div>
<div class="t" style="left:515px;top:871px;color:#0c2e38">0:00.00</div>
<div class="t" style="left:587px;top:871px;color:#0c2e38">(sd-pam)</div>
<div class="t" style="left:29px;top:889px;color:#aaaaaa">2493</div>
<div class="t" style="left:74px;top:889px;color:#aaaaaa">orangepi</div>
<div class="t" style="left:173px;top:889px;color:#aaaaaa">20</div>
<div class="t" style="left:218px;top:889px;color:#aaaaaa">0</div>
<div class="t" style="left:245px;top:889px;color:#06989a">8</div>
<div class="t" style="left:254px;top:889px;color:#aaaaaa">104</div>
<div class="t" style="left:299px;top:889px;color:#06989a">4</div>
<div class="t" style="left:308px;top:889px;color:#aaaaaa">656</div>
<div class="t" style="left:353px;top:889px;color:#06989a">3</div>
<div class="t" style="left:362px;top:889px;color:#aaaaaa">088</div>
<div class="t" style="left:398px;top:889px;color:#aaaaaa">S</div>
<div class="t" style="left:425px;top:889px;color:#aaaaaa">0.0</div>
<div class="t" style="left:470px;top:889px;color:#aaaaaa">0.0</div>
<div class="t" style="left:515px;top:889px;color:#aaaaaa">0:00.04</div>
<div class="t" style="left:587px;top:889px;color:#aaaaaa">-bash</div>
<div class="t" style="left:29px;top:907px;color:#aaaaaa">2494</div>
<div class="t" style="left:74px;top:907px;color:#aaaaaa">orangepi</div>
<div class="t" style="left:173px;top:907px;color:#aaaaaa">20</div>
<div class="t" style="left:218px;top:907px;color:#aaaaaa">0</div>
<div class="t" style="left:245px;top:907px;color:#06989a">8</div>
<div class="t" style="left:254px;top:907px;color:#aaaaaa">104</div>
<div class="t" style="left:299px;top:907px;color:#06989a">4</div>
<div class="t" style="left:308px;top:907px;color:#aaaaaa">584</div>
<div class="t" style="left:353px;top:907px;color:#06989a">3</div>
<div class="t" style="left:362px;top:907px;color:#aaaaaa">004</div>
<div class="t" style="left:398px;top:907px;color:#aaaaaa">S</div>
<div class="t" style="left:425px;top:907px;color:#aaaaaa">0.0</div>
<div class="t" style="left:470px;top:907px;color:#aaaaaa">0.0</div>
<div class="t" style="left:515px;top:907px;color:#aaaaaa">0:00.02</div>
<div class="t" style="left:587px;top:907px;color:#aaaaaa">-bash</div>
<div class="t" style="left:29px;top:925px;color:#aaaaaa">2959</div>
<div class="t" style="left:74px;top:925px;color:#aaaaaa">orangepi</div>
<div class="t" style="left:173px;top:925px;color:#aaaaaa">20</div>
<div class="t" style="left:218px;top:925px;color:#aaaaaa">0</div>
<div class="t" style="left:245px;top:925px;color:#06989a">8</div>
<div class="t" style="left:254px;top:925px;color:#aaaaaa">224</div>
<div class="t" style="left:299px;top:925px;color:#06989a">4</div>
<div class="t" style="left:308px;top:925px;color:#aaaaaa">920</div>
<div class="t" style="left:353px;top:925px;color:#06989a">3</div>
<div class="t" style="left:362px;top:925px;color:#aaaaaa">140</div>
<div class="t" style="left:398px;top:925px;color:#aaaaaa">S</div>
<div class="t" style="left:425px;top:925px;color:#aaaaaa">0.0</div>
<div class="t" style="left:470px;top:925px;color:#aaaaaa">0.0</div>
<div class="t" style="left:515px;top:925px;color:#aaaaaa">0:00.04</div>
<div class="t" style="left:587px;top:925px;color:#aaaaaa">-bash</div>
<div class="t" style="left:29px;top:943px;color:#aaaaaa">2550</div>
<div class="t" style="left:74px;top:943px;color:#aaaaaa">orangepi</div>
<div class="t" style="left:173px;top:943px;color:#aaaaaa">20</div>
<div class="t" style="left:218px;top:943px;color:#aaaaaa">0</div>
<div class="t" style="left:245px;top:943px;color:#06989a">7</div>
<div class="t" style="left:254px;top:943px;color:#aaaaaa">972</div>
<div class="t" style="left:299px;top:943px;color:#06989a">4</div>
<div class="t" style="left:308px;top:943px;color:#aaaaaa">752</div>
<div class="t" style="left:353px;top:943px;color:#06989a">3</div>
<div class="t" style="left:362px;top:943px;color:#aaaaaa">124</div>
<div class="t" style="left:398px;top:943px;color:#aaaaaa">S</div>
<div class="t" style="left:425px;top:943px;color:#aaaaaa">0.0</div>
<div class="t" style="left:470px;top:943px;color:#aaaaaa">0.0</div>
<div class="t" style="left:515px;top:943px;color:#aaaaaa">0:00.02</div>
<div class="t" style="left:587px;top:943px;color:#aaaaaa">/bin/bash</div>
<div class="t" style="left:29px;top:961px;color:#aaaaaa">2572</div>
<div class="t" style="left:74px;top:961px;color:#aaaaaa">orangepi</div>
<div class="t" style="left:173px;top:961px;color:#aaaaaa">20</div>
<div class="t" style="left:218px;top:961px;color:#aaaaaa">0</div>
<div class="t" style="left:245px;top:961px;color:#06989a">7</div>
<div class="t" style="left:254px;top:961px;color:#aaaaaa">972</div>
<div class="t" style="left:299px;top:961px;color:#06989a">4</div>
<div class="t" style="left:308px;top:961px;color:#aaaaaa">568</div>
<div class="t" style="left:353px;top:961px;color:#06989a">2</div>
<div class="t" style="left:362px;top:961px;color:#aaaaaa">948</div>
<div class="t" style="left:398px;top:961px;color:#aaaaaa">S</div>
<div class="t" style="left:425px;top:961px;color:#aaaaaa">0.0</div>
<div class="t" style="left:470px;top:961px;color:#aaaaaa">0.0</div>
<div class="t" style="left:515px;top:961px;color:#aaaaaa">0:00.03</div>
<div class="t" style="left:587px;top:961px;color:#aaaaaa">/bin/bash</div>
<div class="t" style="left:29px;top:979px;color:#aaaaaa">2593</div>
<div class="t" style="left:74px;top:979px;color:#aaaaaa">orangepi</div>
<div class="t" style="left:173px;top:979px;color:#aaaaaa">20</div>
<div class="t" style="left:218px;top:979px;color:#aaaaaa">0</div>
<div class="t" style="left:245px;top:979px;color:#06989a">7</div>
<div class="t" style="left:254px;top:979px;color:#aaaaaa">972</div>
<div class="t" style="left:299px;top:979px;color:#06989a">4</div>
<div class="t" style="left:308px;top:979px;color:#aaaaaa">616</div>
<div class="t" style="left:353px;top:979px;color:#06989a">3</div>
<div class="t" style="left:362px;top:979px;color:#aaaaaa">072</div>
<div class="t" style="left:398px;top:979px;color:#aaaaaa">S</div>
<div class="t" style="left:425px;top:979px;color:#aaaaaa">0.0</div>
<div class="t" style="left:470px;top:979px;color:#aaaaaa">0.0</div>
<div class="t" style="left:515px;top:979px;color:#aaaaaa">0:00.01</div>
<div class="t" style="left:587px;top:979px;color:#aaaaaa">/bin/bash</div>
<div class="t" style="left:38px;top:997px;color:#aaaaaa">865</div>
<div class="t" style="left:74px;top:997px;color:#555753">root</div>
<div class="t" style="left:173px;top:997px;color:#aaaaaa">10</div>
<div class="t" style="left:200px;top:997px;color:#cc0000">-10</div>
<div class="t" style="left:245px;top:997px;color:#06989a">562M</div>
<div class="t" style="left:299px;top:997px;color:#06989a">9</div>
<div class="t" style="left:308px;top:997px;color:#aaaaaa">424</div>
<div class="t" style="left:353px;top:997px;color:#06989a">8</div>
<div class="t" style="left:362px;top:997px;color:#aaaaaa">252</div>
<div class="t" style="left:398px;top:997px;color:#aaaaaa">S</div>
<div class="t" style="left:425px;top:997px;color:#aaaaaa">0.0</div>
<div class="t" style="left:470px;top:997px;color:#aaaaaa">0.1</div>
<div class="t" style="left:515px;top:997px;color:#aaaaaa">0:00.00</div>
<div class="t" style="left:587px;top:997px;color:#4e9a06">/bin/brltty --no-daemon</div>
<div class="t" style="left:38px;top:1015px;color:#aaaaaa">866</div>
<div class="t" style="left:74px;top:1015px;color:#555753">root</div>
<div class="t" style="left:173px;top:1015px;color:#aaaaaa">10</div>
<div class="t" style="left:200px;top:1015px;color:#cc0000">-10</div>
<div class="t" style="left:245px;top:1015px;color:#06989a">562M</div>
<div class="t" style="left:299px;top:1015px;color:#06989a">9</div>
<div class="t" style="left:308px;top:1015px;color:#aaaaaa">424</div>
<div class="t" style="left:353px;top:1015px;color:#06989a">8</div>
<div class="t" style="left:362px;top:1015px;color:#aaaaaa">252</div>
<div class="t" style="left:398px;top:1015px;color:#aaaaaa">S</div>
<div class="t" style="left:425px;top:1015px;color:#aaaaaa">0.0</div>
<div class="t" style="left:470px;top:1015px;color:#aaaaaa">0.1</div>
<div class="t" style="left:515px;top:1015px;color:#aaaaaa">0:00.00</div>
<div class="t" style="left:587px;top:1015px;color:#4e9a06">/bin/brltty --no-daemon</div>
<div class="t" style="left:38px;top:1033px;color:#aaaaaa">867</div>
<div class="t" style="left:74px;top:1033px;color:#555753">root</div>
<div class="t" style="left:173px;top:1033px;color:#aaaaaa">10</div>
<div class="t" style="left:200px;top:1033px;color:#cc0000">-10</div>
<div class="t" style="left:245px;top:1033px;color:#06989a">562M</div>
<div class="t" style="left:299px;top:1033px;color:#06989a">9</div>
<div class="t" style="left:308px;top:1033px;color:#aaaaaa">424</div>
<div class="t" style="left:353px;top:1033px;color:#06989a">8</div>
<div class="t" style="left:362px;top:1033px;color:#aaaaaa">252</div>
<div class="t" style="left:398px;top:1033px;color:#aaaaaa">S</div>
<div class="t" style="left:425px;top:1033px;color:#aaaaaa">0.0</div>
<div class="t" style="left:470px;top:1033px;color:#aaaaaa">0.1</div>
<div class="t" style="left:515px;top:1033px;color:#aaaaaa">0:00.00</div>
<div class="t" style="left:587px;top:1033px;color:#4e9a06">/bin/brltty --no-daemon</div>
<div class="t" style="left:2px;top:1051px;color:#aaaaaa">F1</div>
<div class="t" style="left:20px;top:1051px;color:#0c2e38">Help</div>
<div class="t" style="left:74px;top:1051px;color:#aaaaaa">F2</div>
<div class="t" style="left:92px;top:1051px;color:#0c2e38">Setup</div>
<div class="t" style="left:146px;top:1051px;color:#aaaaaa">F3</div>
<div class="t" style="left:164px;top:1051px;color:#0c2e38">Search</div>
<div class="t" style="left:218px;top:1051px;color:#aaaaaa">F4</div>
<div class="t" style="left:236px;top:1051px;color:#0c2e38">Filter</div>
<div class="t" style="left:290px;top:1051px;color:#aaaaaa">F5</div>
<div class="t" style="left:308px;top:1051px;color:#0c2e38">Tree</div>
<div class="t" style="left:362px;top:1051px;color:#aaaaaa">F6</div>
<div class="t" style="left:380px;top:1051px;color:#0c2e38">SortBy</div>
<div class="t" style="left:434px;top:1051px;color:#aaaaaa">F7</div>
<div class="t" style="left:452px;top:1051px;color:#0c2e38">Nice -</div>
<div class="t" style="left:506px;top:1051px;color:#aaaaaa">F8</div>
<div class="t" style="left:524px;top:1051px;color:#0c2e38">Nice +</div>
<div class="t" style="left:578px;top:1051px;color:#aaaaaa">F9</div>
<div class="t" style="left:596px;top:1051px;color:#0c2e38">Kill</div>
<div class="t" style="left:650px;top:1051px;color:#aaaaaa">F10</div>
<div class="t" style="left:677px;top:1051px;color:#0c2e38">Quit</div><div class="t" style="left:962px;top:77px;color:#bfa22a;font-weight:bold">RK3588 Telemetry (TUI) for Orange Pi 5 Max by SkatterBencher (v0.12) - Press &#x27;q&#x27; to quit</div>
<div class="t" style="left:962px;top:113px;color:#707070">Update interval: 0.5 seconds</div>
<div class="t" style="left:962px;top:131px;color:#707070">Logging: ENABLED</div>
<div class="t" style="left:962px;top:167px;color:#bfa22a;font-weight:bold">## Frequencies ##</div>
<div class="t" style="left:1268px;top:167px;color:#bfa22a;font-weight:bold">## Temperatures ##</div>
<div class="t" style="left:1574px;top:167px;color:#bfa22a;font-weight:bold">## Voltages ##</div>
<div class="t" style="left:962px;top:185px;color:#aaaaaa">armclk_A55_0-3</div>
<div class="t" style="left:1151px;top:185px;color:#aaaaaa">12 MHz</div>
<div class="t" style="left:1268px;top:185px;color:#aaaaaa">bigcore0_thermal</div>
<div class="t" style="left:1457px;top:185px;color:#aaaaaa">37.9 °C</div>
<div class="t" style="left:1574px;top:185px;color:#aaaaaa">avcc_1v8_s0</div>
<div class="t" style="left:1763px;top:185px;color:#aaaaaa">1800 mV</div>
<div class="t" style="left:962px;top:203px;color:#aaaaaa">armclk_A76_0-1</div>
<div class="t" style="left:1151px;top:203px;color:#aaaaaa">8 MHz</div>
<div class="t" style="left:1268px;top:203px;color:#aaaaaa">bigcore1_thermal</div>
<div class="t" style="left:1457px;top:203px;color:#aaaaaa">37.9 °C</div>
<div class="t" style="left:1574px;top:203px;color:#aaaaaa">avdd_0v75_s0</div>
<div class="t" style="left:1763px;top:203px;color:#aaaaaa">838 mV</div>
<div class="t" style="left:962px;top:221px;color:#aaaaaa">armclk_A75_2-3</div>
<div class="t" style="left:1151px;top:221px;color:#aaaaaa">12 MHz</div>
<div class="t" style="left:1268px;top:221px;color:#aaaaaa">center_thermal</div>
<div class="t" style="left:1457px;top:221px;color:#aaaaaa">35.2 °C</div>
<div class="t" style="left:1574px;top:221px;color:#aaaaaa">avdd_1v2_s0</div>
<div class="t" style="left:1763px;top:221px;color:#aaaaaa">1200 mV</div>
<div class="t" style="left:962px;top:239px;color:#aaaaaa">scmi_clk_A55_0-3</div>
<div class="t" style="left:1151px;top:239px;color:#aaaaaa">1800 MHz</div>
<div class="t" style="left:1268px;top:239px;color:#aaaaaa">gpu_thermal</div>
<div class="t" style="left:1457px;top:239px;color:#aaaaaa">34.2 °C</div>
<div class="t" style="left:1574px;top:239px;color:#aaaaaa">pcie20_avdd0v85</div>
<div class="t" style="left:1763px;top:239px;color:#aaaaaa">850 mV</div>
<div class="t" style="left:962px;top:257px;color:#aaaaaa">scmi_clk_A76_0-1</div>
<div class="t" style="left:1151px;top:257px;color:#aaaaaa">2256 MHz</div>
<div class="t" style="left:1268px;top:257px;color:#aaaaaa">littlecore_thermal</div>
<div class="t" style="left:1457px;top:257px;color:#aaaaaa">37.0 °C</div>
<div class="t" style="left:1574px;top:257px;color:#aaaaaa">pcie20_avdd1v8</div>
<div class="t" style="left:1763px;top:257px;color:#aaaaaa">1800 mV</div>
<div class="t" style="left:962px;top:275px;color:#aaaaaa">scmi_clk_A76_2-3</div>
<div class="t" style="left:1151px;top:275px;color:#aaaaaa">2256 MHz</div>
<div class="t" style="left:1268px;top:275px;color:#aaaaaa">npu_thermal</div>
<div class="t" style="left:1457px;top:275px;color:#aaaaaa">35.2 °C</div>
<div class="t" style="left:1574px;top:275px;color:#aaaaaa">pcie30_avdd0v75</div>
<div class="t" style="left:1763px;top:275px;color:#aaaaaa">750 mV</div>
<div class="t" style="left:962px;top:293px;color:#aaaaaa">scmi_clk_DSU</div>
<div class="t" style="left:1151px;top:293px;color:#aaaaaa">1800 MHz</div>
<div class="t" style="left:1268px;top:293px;color:#aaaaaa">soc_thermal</div>
<div class="t" style="left:1457px;top:293px;color:#aaaaaa">37.0 °C</div>
<div class="t" style="left:1574px;top:293px;color:#aaaaaa">pcie30_avdd1v8</div>
<div class="t" style="left:1763px;top:293px;color:#aaaaaa">1800 mV</div>
<div class="t" style="left:962px;top:311px;color:#aaaaaa">scmi_clk_DMC</div>
<div class="t" style="left:1151px;top:311px;color:#aaaaaa">534 MHz</div>
<div class="t" style="left:1574px;top:311px;color:#aaaaaa">pldo6_s3</div>
<div class="t" style="left:1763px;top:311px;color:#aaaaaa">1800 mV</div>
<div class="t" style="left:962px;top:329px;color:#aaaaaa">scmi_clk_NPU</div>
<div class="t" style="left:1151px;top:329px;color:#aaaaaa">200 MHz</div>
<div class="t" style="left:1268px;top:329px;color:#bfa22a;font-weight:bold">## Governors ##</div>
<div class="t" style="left:1574px;top:329px;color:#aaaaaa">vcc12v_dcin</div>
<div class="t" style="left:1763px;top:329px;color:#aaaaaa">12000 mV</div>
<div class="t" style="left:962px;top:347px;color:#aaaaaa">scmi_clk_GPU</div>
<div class="t" style="left:1151px;top:347px;color:#aaaaaa">200 MHz</div>
<div class="t" style="left:1268px;top:347px;color:#aaaaaa">CPU0</div>
<div class="t" style="left:1457px;top:347px;color:#aaaaaa">ondemand</div>
<div class="t" style="left:1574px;top:347px;color:#aaaaaa">vcc3v3_pcie2x1l0</div>
<div class="t" style="left:1763px;top:347px;color:#aaaaaa">3300 mV</div>
<div class="t" style="left:962px;top:365px;color:#aaaaaa">clk_GPU</div>
<div class="t" style="left:1151px;top:365px;color:#aaaaaa">200 MHz</div>
<div class="t" style="left:1268px;top:365px;color:#aaaaaa">CPU1</div>
<div class="t" style="left:1457px;top:365px;color:#aaaaaa">ondemand</div>
<div class="t" style="left:1574px;top:365px;color:#aaaaaa">vcc3v3_pcie30</div>
<div class="t" style="left:1763px;top:365px;color:#aaaaaa">3300 mV</div>
<div class="t" style="left:962px;top:383px;color:#aaaaaa">clk_GPU_STACKS</div>
<div class="t" style="left:1151px;top:383px;color:#aaaaaa">198 MHz</div>
<div class="t" style="left:1268px;top:383px;color:#aaaaaa">CPU2</div>
<div class="t" style="left:1457px;top:383px;color:#aaaaaa">ondemand</div>
<div class="t" style="left:1574px;top:383px;color:#aaaaaa">vcc3v3_pcie_eth</div>
<div class="t" style="left:1763px;top:383px;color:#aaaaaa">3300 mV</div>
<div class="t" style="left:962px;top:401px;color:#aaaaaa">clk_GPU_COREGROUP</div>
<div class="t" style="left:1151px;top:401px;color:#aaaaaa">198 MHz</div>
<div class="t" style="left:1268px;top:401px;color:#aaaaaa">CPU3</div>
<div class="t" style="left:1457px;top:401px;color:#aaaaaa">ondemand</div>
<div class="t" style="left:1574px;top:401px;color:#aaaaaa">vcc5v0_host</div>
<div class="t" style="left:1763px;top:401px;color:#aaaaaa">5000 mV</div>
<div class="t" style="left:962px;top:419px;color:#aaaaaa">dclk_VOP3</div>
<div class="t" style="left:1151px;top:419px;color:#aaaaaa">198 MHz</div>
<div class="t" style="left:1268px;top:419px;color:#aaaaaa">CPU4</div>
<div class="t" style="left:1457px;top:419px;color:#aaaaaa">ondemand</div>
<div class="t" style="left:1574px;top:419px;color:#aaaaaa">vcc5v0_otg</div>
<div class="t" style="left:1763px;top:419px;color:#aaaaaa">5000 mV</div>
<div class="t" style="left:962px;top:437px;color:#aaaaaa">dclk_VOP2</div>
<div class="t" style="left:1151px;top:437px;color:#aaaaaa">12 MHz</div>
<div class="t" style="left:1268px;top:437px;color:#aaaaaa">CPU5</div>
<div class="t" style="left:1457px;top:437px;color:#aaaaaa">ondemand</div>
<div class="t" style="left:1574px;top:437px;color:#aaaaaa">vcc5v0_sys</div>
<div class="t" style="left:1763px;top:437px;color:#aaaaaa">5000 mV</div>
<div class="t" style="left:962px;top:455px;color:#aaaaaa">dclk_VOP1</div>
<div class="t" style="left:1151px;top:455px;color:#aaaaaa">594 MHz</div>
<div class="t" style="left:1268px;top:455px;color:#aaaaaa">CPU6</div>
<div class="t" style="left:1457px;top:455px;color:#aaaaaa">ondemand</div>
<div class="t" style="left:1574px;top:455px;color:#aaaaaa">vcc5v0_usb</div>
<div class="t" style="left:1763px;top:455px;color:#aaaaaa">5000 mV</div>
<div class="t" style="left:1268px;top:473px;color:#aaaaaa">CPU7</div>
<div class="t" style="left:1457px;top:473px;color:#aaaaaa">ondemand</div>
<div class="t" style="left:1574px;top:473px;color:#aaaaaa">vcc5v0_usbdcin</div>
<div class="t" style="left:1763px;top:473px;color:#aaaaaa">5000 mV</div>
<div class="t" style="left:962px;top:491px;color:#bfa22a;font-weight:bold">## Advanced Frequencies ##</div>
<div class="t" style="left:1268px;top:491px;color:#aaaaaa">DMC</div>
<div class="t" style="left:1457px;top:491px;color:#aaaaaa">dmc_ondemand</div>
<div class="t" style="left:1574px;top:491px;color:#aaaaaa">vcc_1v1_nldo_s3</div>
<div class="t" style="left:1763px;top:491px;color:#aaaaaa">1100 mV</div>
<div class="t" style="left:962px;top:509px;color:#aaaaaa">A55_L0:</div>
<div class="t" style="left:1106px;top:509px;color:#aaaaaa">1771 MHz (PVTPLL)</div>
<div class="t" style="left:1268px;top:509px;color:#aaaaaa">GPU</div>
<div class="t" style="left:1457px;top:509px;color:#aaaaaa">simple_ondem</div>
<div class="t" style="left:1574px;top:509px;color:#aaaaaa">vcc_1v8_s0</div>
<div class="t" style="left:1763px;top:509px;color:#aaaaaa">1800 mV</div>
<div class="t" style="left:962px;top:527px;color:#aaaaaa">A55_L1:</div>
<div class="t" style="left:1106px;top:527px;color:#aaaaaa">1771 MHz (PVTPLL)</div>
<div class="t" style="left:1268px;top:527px;color:#aaaaaa">GPU_VR</div>
<div class="t" style="left:1457px;top:527px;color:#aaaaaa">coarse_deman</div>
<div class="t" style="left:1574px;top:527px;color:#aaaaaa">vcc_1v8_s3</div>
<div class="t" style="left:1763px;top:527px;color:#aaaaaa">1800 mV</div>
<div class="t" style="left:962px;top:545px;color:#aaaaaa">A55_L2:</div>
<div class="t" style="left:1106px;top:545px;color:#aaaaaa">1771 MHz (PVTPLL)</div>
<div class="t" style="left:1268px;top:545px;color:#aaaaaa">NPU</div>
<div class="t" style="left:1457px;top:545px;color:#aaaaaa">rknpu_ondema</div>
<div class="t" style="left:1574px;top:545px;color:#aaaaaa">vcc_3v3_s0</div>
<div class="t" style="left:1763px;top:545px;color:#aaaaaa">3300 mV</div>
<div class="t" style="left:962px;top:563px;color:#aaaaaa">A55_L3:</div>
<div class="t" style="left:1106px;top:563px;color:#aaaaaa">1771 MHz (PVTPLL)</div>
<div class="t" style="left:1268px;top:563px;color:#aaaaaa">PCIE</div>
<div class="t" style="left:1457px;top:563px;color:#aaaaaa">powersave</div>
<div class="t" style="left:1574px;top:563px;color:#aaaaaa">vcc_3v3_s3</div>
<div class="t" style="left:1763px;top:563px;color:#aaaaaa">3300 mV</div>
<div class="t" style="left:962px;top:581px;color:#aaaaaa">A76_B0:</div>
<div class="t" style="left:1106px;top:581px;color:#aaaaaa">2209 MHz (PVTPLL)</div>
<div class="t" style="left:1574px;top:581px;color:#aaaaaa">vcc_3v3_sd_s0</div>
<div class="t" style="left:1763px;top:581px;color:#aaaaaa">3300 mV</div>
<div class="t" style="left:962px;top:599px;color:#aaaaaa">A76_B1:</div>
<div class="t" style="left:1106px;top:599px;color:#aaaaaa">2209 MHz (PVTPLL)</div>
<div class="t" style="left:1268px;top:599px;color:#bfa22a;font-weight:bold">## Loads ##</div>
<div class="t" style="left:1574px;top:599px;color:#aaaaaa">vccio_sd_s0</div>
<div class="t" style="left:1763px;top:599px;color:#aaaaaa">3300 mV</div>
<div class="t" style="left:962px;top:617px;color:#aaaaaa">A76_B2:</div>
<div class="t" style="left:1106px;top:617px;color:#aaaaaa">2252 MHz (PVTPLL)</div>
<div class="t" style="left:1268px;top:617px;color:#aaaaaa">CPU</div>
<div class="t" style="left:1457px;top:617px;color:#aaaaaa">100.0 %</div>
<div class="t" style="left:1574px;top:617px;color:#aaaaaa">vdd2_ddr_s3</div>
<div class="t" style="left:1763px;top:617px;color:#aaaaaa">500 mV</div>
<div class="t" style="left:962px;top:635px;color:#aaaaaa">A76_B3:</div>
<div class="t" style="left:1106px;top:635px;color:#aaaaaa">2252 MHz (PVTPLL)</div>
<div class="t" style="left:1268px;top:635px;color:#aaaaaa">CPU0</div>
<div class="t" style="left:1457px;top:635px;color:#aaaaaa">100.0 %</div>
<div class="t" style="left:1574px;top:635px;color:#aaaaaa">vdd_0v75_s0</div>
<div class="t" style="left:1763px;top:635px;color:#aaaaaa">750 mV</div>
<div class="t" style="left:962px;top:653px;color:#aaaaaa">GPU:</div>
<div class="t" style="left:1106px;top:653px;color:#aaaaaa">198 MHz (gpu_src)</div>
<div class="t" style="left:1268px;top:653px;color:#aaaaaa">CPU1</div>
<div class="t" style="left:1457px;top:653px;color:#aaaaaa">100.0 %</div>
<div class="t" style="left:1574px;top:653px;color:#aaaaaa">vdd_0v75_s3</div>
<div class="t" style="left:1763px;top:653px;color:#aaaaaa">750 mV</div>
<div class="t" style="left:962px;top:671px;color:#aaaaaa">NPU:</div>
<div class="t" style="left:1106px;top:671px;color:#aaaaaa">198 MHz (dsu0_src</div>
<div class="t" style="left:1268px;top:671px;color:#aaaaaa">CPU2</div>
<div class="t" style="left:1457px;top:671px;color:#aaaaaa">100.0 %</div>
<div class="t" style="left:1574px;top:671px;color:#aaaaaa">vdd_0v85_s0</div>
<div class="t" style="left:1763px;top:671px;color:#aaaaaa">850 mV</div>
<div class="t" style="left:962px;top:689px;color:#aaaaaa">DSU SCLK:</div>
<div class="t" style="left:1106px;top:689px;color:#aaaaaa">1775 MHz (PVTPLL)</div>
<div class="t" style="left:1268px;top:689px;color:#aaaaaa">CPU3</div>
<div class="t" style="left:1457px;top:689px;color:#aaaaaa">100.0 %</div>
<div class="t" style="left:1574px;top:689px;color:#aaaaaa">vdd_2v0_pldo_s3</div>
<div class="t" style="left:1763px;top:689px;color:#aaaaaa">2000 mV</div>
<div class="t" style="left:962px;top:707px;color:#aaaaaa">DSU ACLK_M:</div>
<div class="t" style="left:1106px;top:707px;color:#aaaaaa">594 MHz</div>
<div class="t" style="left:1268px;top:707px;color:#aaaaaa">CPU4</div>
<div class="t" style="left:1457px;top:707px;color:#aaaaaa">100.0 %</div>
<div class="t" style="left:1574px;top:707px;color:#aaaaaa">vdd_cpu_big0_s0</div>
<div class="t" style="left:1763px;top:707px;color:#aaaaaa">1000 mV</div>
<div class="t" style="left:962px;top:725px;color:#aaaaaa">DSU ACLK_S:</div>
<div class="t" style="left:1106px;top:725px;color:#aaaaaa">396 MHz</div>
<div class="t" style="left:1268px;top:725px;color:#aaaaaa">CPU5</div>
<div class="t" style="left:1457px;top:725px;color:#aaaaaa">100.0 %</div>
<div class="t" style="left:1574px;top:725px;color:#aaaaaa">vdd_cpu_big1_s0</div>
<div class="t" style="left:1763px;top:725px;color:#aaaaaa">1000 mV</div>
<div class="t" style="left:962px;top:743px;color:#aaaaaa">DSU ACLK_MP:</div>
<div class="t" style="left:1106px;top:743px;color:#aaaaaa">396 MHz</div>
<div class="t" style="left:1268px;top:743px;color:#aaaaaa">CPU6</div>
<div class="t" style="left:1457px;top:743px;color:#aaaaaa">100.0 %</div>
<div class="t" style="left:1574px;top:743px;color:#aaaaaa">vdd_cpu_lit_s0</div>
<div class="t" style="left:1763px;top:743px;color:#aaaaaa">950 mV</div>
<div class="t" style="left:962px;top:761px;color:#aaaaaa">DSU PERIPHCLK:</div>
<div class="t" style="left:1106px;top:761px;color:#aaaaaa">297 MHz</div>
<div class="t" style="left:1268px;top:761px;color:#aaaaaa">CPU7</div>
<div class="t" style="left:1457px;top:761px;color:#aaaaaa">100.0 %</div>
<div class="t" style="left:1574px;top:761px;color:#aaaaaa">vdd_ddr_pll_s0</div>
<div class="t" style="left:1763px;top:761px;color:#aaaaaa">850 mV</div>
<div class="t" style="left:962px;top:779px;color:#aaaaaa">DSU CNTCLK:</div>
<div class="t" style="left:1106px;top:779px;color:#aaaaaa">396 MHz</div>
<div class="t" style="left:1268px;top:779px;color:#aaaaaa">DMC</div>
<div class="t" style="left:1457px;top:779px;color:#aaaaaa">5 %</div>
<div class="t" style="left:1574px;top:779px;color:#aaaaaa">vdd_ddr_s0</div>
<div class="t" style="left:1763px;top:779px;color:#aaaaaa">875 mV</div>
<div class="t" style="left:962px;top:797px;color:#aaaaaa">DSU TSCLK:</div>
<div class="t" style="left:1106px;top:797px;color:#aaaaaa">396 MHz</div>
<div class="t" style="left:1268px;top:797px;color:#aaaaaa">GPU</div>
<div class="t" style="left:1457px;top:797px;color:#aaaaaa">0 %</div>
<div class="t" style="left:1574px;top:797px;color:#aaaaaa">vdd_gpu_s0</div>
<div class="t" style="left:1763px;top:797px;color:#aaaaaa">675 mV</div>
<div class="t" style="left:962px;top:815px;color:#aaaaaa">DSU ATCLK:</div>
<div class="t" style="left:1106px;top:815px;color:#aaaaaa">297 MHz</div>
<div class="t" style="left:1268px;top:815px;color:#aaaaaa">NPU</div>
<div class="t" style="left:1457px;top:815px;color:#aaaaaa">100 %</div>
<div class="t" style="left:1574px;top:815px;color:#aaaaaa">vdd_log_s0</div>
<div class="t" style="left:1763px;top:815px;color:#aaaaaa">750 mV</div>
<div class="t" style="left:962px;top:833px;color:#aaaaaa">DSU GICCLK:</div>
<div class="t" style="left:1106px;top:833px;color:#aaaaaa">297 MHz</div>
<div class="t" style="left:1574px;top:833px;color:#aaaaaa">vdd_npu_s0</div>
<div class="t" style="left:1763px;top:833px;color:#aaaaaa">825 mV</div>
<div class="t" style="left:962px;top:851px;color:#aaaaaa">DSU PCLK:</div>
<div class="t" style="left:1106px;top:851px;color:#aaaaaa">198 MHz</div>
<div class="t" style="left:1268px;top:851px;color:#bfa22a;font-weight:bold">## SAR-ADC (Scaled) ##</div>
<div class="t" style="left:1574px;top:851px;color:#aaaaaa">vdd_vdenc_s0</div>
<div class="t" style="left:1763px;top:851px;color:#aaaaaa">750 mV</div>
<div class="t" style="left:1268px;top:869px;color:#aaaaaa">SARADC0</div>
<div class="t" style="left:1457px;top:869px;color:#aaaaaa">1793</div>
<div class="t" style="left:1574px;top:869px;color:#aaaaaa">vddq_ddr_s0</div>
<div class="t" style="left:1763px;top:869px;color:#aaaaaa">500 mV</div>
<div class="t" style="left:1268px;top:887px;color:#aaaaaa">SARADC1</div>
<div class="t" style="left:1457px;top:887px;color:#aaaaaa">1799</div>
<div class="t" style="left:1268px;top:905px;color:#aaaaaa">SARADC2</div>
<div class="t" style="left:1457px;top:905px;color:#aaaaaa">1784</div>
<div class="t" style="left:1268px;top:923px;color:#aaaaaa">SARADC3</div>
<div class="t" style="left:1457px;top:923px;color:#aaaaaa">1617</div>
<div class="t" style="left:1268px;top:941px;color:#aaaaaa">SARADC4</div>
<div class="t" style="left:1457px;top:941px;color:#aaaaaa">1346</div>
<div class="t" style="left:1268px;top:959px;color:#aaaaaa">SARADC5</div>
<div class="t" style="left:1457px;top:959px;color:#aaaaaa">1232</div>
<div class="t" style="left:1268px;top:977px;color:#aaaaaa">SARADC6</div>
<div class="t" style="left:1457px;top:977px;color:#aaaaaa">1140</div>
<div class="t" style="left:1268px;top:995px;color:#aaaaaa">SARADC7</div>
<div class="t" style="left:1457px;top:995px;color:#aaaaaa">1109</div></div>
<svg style="position:absolute;left:1133px;top:657px" width="10" height="21" viewBox="0 0 10 21">
<path d="M2.5 2.5 Q5 2.5 5 4.5 Q5 2.5 7.5 2.5 M5 4.5 V16.5 M2.5 18.5 Q5 18.5 5 16.5 Q5 18.5 7.5 18.5" stroke="#fff" stroke-width="3.2" fill="none" stroke-linecap="round"/>
<path d="M2.5 2.5 Q5 2.5 5 4.5 Q5 2.5 7.5 2.5 M5 4.5 V16.5 M2.5 18.5 Q5 18.5 5 16.5 Q5 18.5 7.5 18.5" stroke="#000" stroke-width="1.1" fill="none" stroke-linecap="round"/>
</svg>
</div></body></html>
